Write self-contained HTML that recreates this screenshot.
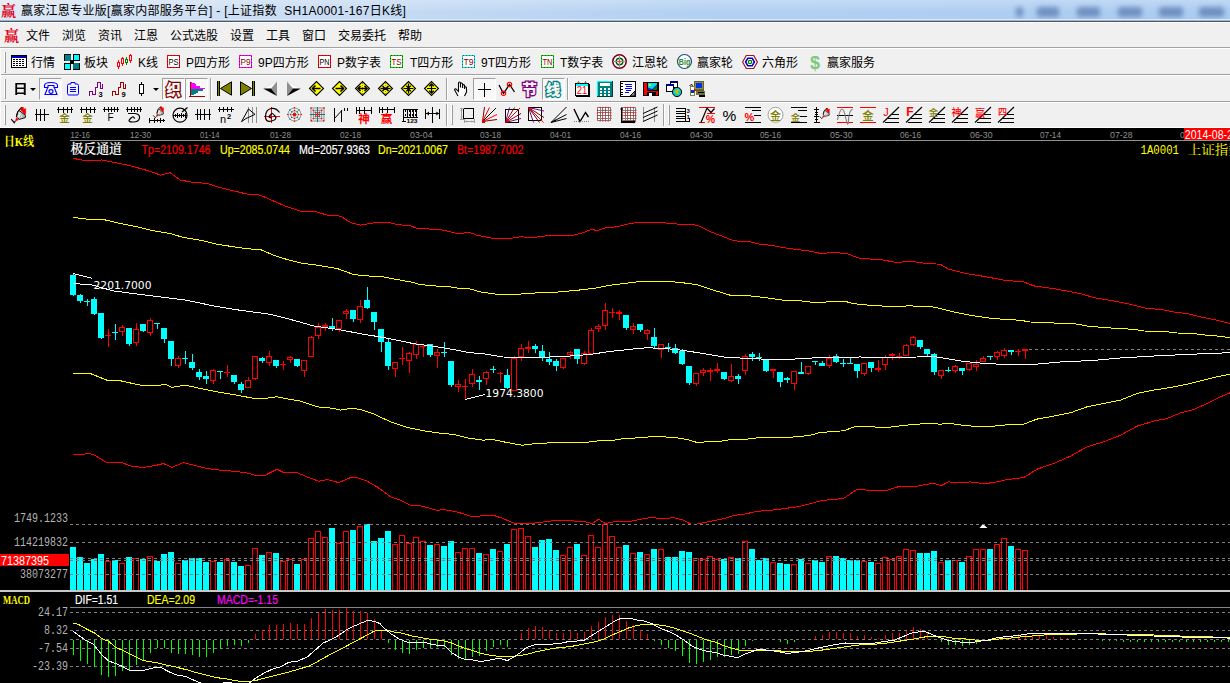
<!DOCTYPE html><html lang="zh"><head><meta charset="utf-8"><title>赢家江恩专业版</title><style>
*{margin:0;padding:0;box-sizing:border-box}
html,body{width:1230px;height:683px;overflow:hidden;background:#f0f0f0}
body{font-family:"Liberation Sans","Noto Sans CJK SC",sans-serif;font-size:12px;color:#000}
#r{position:relative;width:1230px;height:683px;overflow:hidden;background:#f0f0f0}
.a{position:absolute}
.t{position:absolute;white-space:nowrap;font-size:12px;line-height:14px;height:14px}
.hl{position:absolute;left:0;width:1230px;height:1px}
.ic{position:absolute;width:16px;height:16px;overflow:visible}
.grip{position:absolute;width:2px;border-left:1px solid #fff;border-right:1px solid #9a9a9a;border-bottom:1px solid #9a9a9a}
.sep{position:absolute;width:2px;border-left:1px solid #a0a0a0;border-right:1px solid #fff}
.pb{position:absolute;border:1px solid;border-color:#a0a0a0 #fff #fff #a0a0a0;background:#f8f8f8}
.arr{position:absolute;width:0;height:0;border:3px solid transparent;border-top:3px solid #000;border-bottom:0}
.blob{position:absolute;background:#5677ad;opacity:.7;filter:blur(2.5px);border-radius:2px}
</style></head><body><div id="r">
<div class="a" style="left:0;top:0;width:1230px;height:21px;background:linear-gradient(90deg,#dfe9f5 0,#d3e2f4 120px,#c3d9f3 420px,#b2d0f2 700px,#aacbf1 1230px)"></div>
<div class="a" style="left:0;top:0;width:1230px;height:21px;background:linear-gradient(180deg,rgba(255,255,255,.25),rgba(255,255,255,0) 60%)"></div>
<div class="blob" style="left:1016px;top:7px;width:7px;height:10px"></div>
<div class="blob" style="left:1037px;top:7px;width:22px;height:10px"></div>
<div class="blob" style="left:1077px;top:7px;width:23px;height:10px"></div>
<div class="blob" style="left:1118px;top:7px;width:24px;height:10px"></div>
<div class="blob" style="left:1159px;top:7px;width:24px;height:10px"></div>
<div class="blob" style="left:1199px;top:7px;width:25px;height:10px"></div>
<div class="hl" style="top:19px;background:#dbe8f6"></div><div class="hl" style="top:20px;background:#9fb4cc"></div><div class="hl" style="top:21px;background:#4d5a6b"></div><div class="hl" style="top:22px;background:#fcfcfc"></div>
<div class="t" style="left:1px;top:3px;font-size:15px;line-height:16px;height:16px;color:#e0001a;font-family:'Liberation Serif','Noto Serif CJK SC',serif;font-weight:700">赢</div>
<div class="t" id="ttl" style="left:21px;top:4px;letter-spacing:.29px">赢家江恩专业版[赢家内部服务平台] - [上证指数&nbsp; SH1A0001-167日K线]</div>
<div class="t" style="left:4px;top:28px;font-size:15px;line-height:16px;height:16px;color:#e0001a;font-family:'Liberation Serif','Noto Serif CJK SC',serif;font-weight:700">赢</div>
<div class="t" style="left:26px;top:29px">文件</div>
<div class="t" style="left:62px;top:29px">浏览</div>
<div class="t" style="left:98px;top:29px">资讯</div>
<div class="t" style="left:134px;top:29px">江恩</div>
<div class="t" style="left:170px;top:29px">公式选股</div>
<div class="t" style="left:230px;top:29px">设置</div>
<div class="t" style="left:266px;top:29px">工具</div>
<div class="t" style="left:302px;top:29px">窗口</div>
<div class="t" style="left:338px;top:29px">交易委托</div>
<div class="t" style="left:398px;top:29px">帮助</div>
<div class="hl" style="top:47px;background:#a0a0a0"></div><div class="hl" style="top:48px;background:#fff"></div>
<div class="hl" style="top:74px;background:#a0a0a0"></div><div class="hl" style="top:75px;background:#fff"></div>
<div class="hl" style="top:101px;background:#a0a0a0"></div><div class="hl" style="top:102px;background:#fff"></div>
<div class="hl" style="top:127px;background:#fff"></div><div class="a" style="left:0;top:49px;width:1px;height:78px;background:#fafafa"></div>
<div class="grip" style="left:4px;top:52px;height:21px"></div>
<div class="grip" style="left:4px;top:79px;height:20px"></div>
<div class="grip" style="left:4px;top:105px;height:20px"></div>
<div class="grip" style="left:451px;top:105px;height:20px"></div>
<div class="grip" style="left:668px;top:105px;height:20px"></div>
<div class="sep" style="left:210px;top:78px;height:22px"></div>
<div class="sep" style="left:446px;top:78px;height:22px"></div>
<div class="sep" style="left:567px;top:78px;height:22px"></div>
<div class="sep" style="left:446px;top:104px;height:22px"></div>
<div class="sep" style="left:663px;top:104px;height:22px"></div>
<svg class="ic" style="left:11px;top:54px" width="16" height="16" viewBox="0 0 16 16"><rect x="0" y="1" width="16" height="13" fill="#000" shape-rendering="crispEdges"/><rect x="1" y="2" width="14" height="11" fill="#fff" shape-rendering="crispEdges"/><rect x="1" y="2" width="14" height="2" fill="#0000c0" shape-rendering="crispEdges"/><rect x="2" y="5.0" width="2" height="1" fill="#000" shape-rendering="crispEdges"/><rect x="5" y="5.0" width="2" height="1" fill="#000" shape-rendering="crispEdges"/><rect x="8" y="5.0" width="2" height="1" fill="#000" shape-rendering="crispEdges"/><rect x="11" y="5.0" width="2" height="1" fill="#000" shape-rendering="crispEdges"/><rect x="2" y="7.0" width="2" height="1" fill="#000" shape-rendering="crispEdges"/><rect x="5" y="7.0" width="2" height="1" fill="#000" shape-rendering="crispEdges"/><rect x="8" y="7.0" width="2" height="1" fill="#000" shape-rendering="crispEdges"/><rect x="11" y="7.0" width="2" height="1" fill="#000" shape-rendering="crispEdges"/><rect x="2" y="9.0" width="2" height="1" fill="#000" shape-rendering="crispEdges"/><rect x="5" y="9.0" width="2" height="1" fill="#000" shape-rendering="crispEdges"/><rect x="8" y="9.0" width="2" height="1" fill="#000" shape-rendering="crispEdges"/><rect x="11" y="9.0" width="2" height="1" fill="#000" shape-rendering="crispEdges"/><rect x="2" y="11.0" width="2" height="1" fill="#000" shape-rendering="crispEdges"/><rect x="5" y="11.0" width="2" height="1" fill="#000" shape-rendering="crispEdges"/><rect x="8" y="11.0" width="2" height="1" fill="#000" shape-rendering="crispEdges"/><rect x="11" y="11.0" width="2" height="1" fill="#000" shape-rendering="crispEdges"/></svg>
<div class="t" style="left:31px;top:56px">行情</div>
<svg class="ic" style="left:64px;top:54px" width="16" height="16" viewBox="0 0 16 16"><rect x="0" y="0" width="16" height="16" fill="#000" shape-rendering="crispEdges"/><rect x="1" y="1" width="14" height="14" fill="#00c0c0" shape-rendering="crispEdges"/><rect x="1" y="1" width="6" height="6" fill="#008080" shape-rendering="crispEdges"/><rect x="9" y="0" width="7" height="7" fill="#000" shape-rendering="crispEdges"/><rect x="10" y="1" width="5" height="5" fill="#0ff" shape-rendering="crispEdges"/><rect x="0" y="9" width="7" height="7" fill="#000" shape-rendering="crispEdges"/><rect x="1" y="10" width="5" height="5" fill="#0ff" shape-rendering="crispEdges"/><rect x="9" y="9" width="6" height="6" fill="#008080" shape-rendering="crispEdges"/><rect x="7" y="0" width="2" height="16" fill="#f0f0f0" shape-rendering="crispEdges"/><rect x="0" y="7" width="16" height="2" fill="#f0f0f0" shape-rendering="crispEdges"/><rect x="6" y="6" width="4" height="4" fill="#000" shape-rendering="crispEdges"/></svg>
<div class="t" style="left:84px;top:56px">板块</div>
<svg class="ic" style="left:116px;top:54px" width="16" height="16" viewBox="0 0 16 16"><rect x="2" y="6" width="1" height="9" fill="#f00" shape-rendering="crispEdges"/><rect x="1" y="8" width="3" height="5" fill="#f00" shape-rendering="crispEdges"/><rect x="2" y="9" width="1" height="3" fill="#f0f0f0" shape-rendering="crispEdges"/><rect x="6" y="3" width="1" height="9" fill="#f00" shape-rendering="crispEdges"/><rect x="5" y="4" width="3" height="6" fill="#f00" shape-rendering="crispEdges"/><rect x="6" y="5" width="1" height="4" fill="#f0f0f0" shape-rendering="crispEdges"/><rect x="10" y="3" width="1" height="8" fill="#008000" shape-rendering="crispEdges"/><rect x="9" y="5" width="3" height="4" fill="#008000" shape-rendering="crispEdges"/><rect x="10" y="6" width="1" height="2" fill="#f0f0f0" shape-rendering="crispEdges"/><rect x="14" y="0" width="1" height="9" fill="#f00" shape-rendering="crispEdges"/><rect x="13" y="1" width="3" height="6" fill="#f00" shape-rendering="crispEdges"/><rect x="14" y="2" width="1" height="4" fill="#f0f0f0" shape-rendering="crispEdges"/></svg>
<div class="t" style="left:138px;top:56px">K线</div>
<svg class="ic" style="left:166px;top:54px" width="16" height="16" viewBox="0 0 16 16"><rect x="1" y="1" width="13" height="13" fill="#fff" shape-rendering="crispEdges"/><rect x="1.5" y="1.5" width="12" height="12" fill="none" stroke="#f00" stroke-width="1" shape-rendering="crispEdges"/><rect x="1.5" y="1.5" width="12" height="12" fill="none" stroke="#400000" stroke-opacity=".55" stroke-width="1" stroke-dasharray="1 2" shape-rendering="crispEdges"/><text x="7.5" y="10.6" font-size="8.5" fill="#000" font-family='"Liberation Sans","Noto Sans CJK SC",sans-serif' text-anchor="middle" textLength="10" lengthAdjust="spacingAndGlyphs">PS</text></svg>
<div class="t" style="left:186px;top:56px">P四方形</div>
<svg class="ic" style="left:238px;top:54px" width="16" height="16" viewBox="0 0 16 16"><rect x="1" y="1" width="13" height="13" fill="#fff" shape-rendering="crispEdges"/><rect x="1.5" y="1.5" width="12" height="12" fill="none" stroke="#f0f" stroke-width="1" shape-rendering="crispEdges"/><rect x="1.5" y="1.5" width="12" height="12" fill="none" stroke="#400000" stroke-opacity=".55" stroke-width="1" stroke-dasharray="1 2" shape-rendering="crispEdges"/><text x="7.5" y="10.6" font-size="8.5" fill="#800000" font-family='"Liberation Sans","Noto Sans CJK SC",sans-serif' text-anchor="middle" textLength="10" lengthAdjust="spacingAndGlyphs">P9</text></svg>
<div class="t" style="left:258px;top:56px">9P四方形</div>
<svg class="ic" style="left:317px;top:54px" width="16" height="16" viewBox="0 0 16 16"><rect x="1" y="1" width="13" height="13" fill="#fff" shape-rendering="crispEdges"/><rect x="1.5" y="1.5" width="12" height="12" fill="none" stroke="#f00" stroke-width="1" shape-rendering="crispEdges"/><rect x="1.5" y="1.5" width="12" height="12" fill="none" stroke="#400000" stroke-opacity=".55" stroke-width="1" stroke-dasharray="1 2" shape-rendering="crispEdges"/><text x="7.5" y="10.6" font-size="8.5" fill="#000" font-family='"Liberation Sans","Noto Sans CJK SC",sans-serif' text-anchor="middle" textLength="10" lengthAdjust="spacingAndGlyphs">PN</text></svg>
<div class="t" style="left:337px;top:56px">P数字表</div>
<svg class="ic" style="left:389px;top:54px" width="16" height="16" viewBox="0 0 16 16"><rect x="1" y="1" width="13" height="13" fill="#fff" shape-rendering="crispEdges"/><rect x="1.5" y="1.5" width="12" height="12" fill="none" stroke="#0c0" stroke-width="1" shape-rendering="crispEdges"/><rect x="1.5" y="1.5" width="12" height="12" fill="none" stroke="#400000" stroke-opacity=".55" stroke-width="1" stroke-dasharray="1 2" shape-rendering="crispEdges"/><text x="7.5" y="10.6" font-size="8.5" fill="#800000" font-family='"Liberation Sans","Noto Sans CJK SC",sans-serif' text-anchor="middle" textLength="10" lengthAdjust="spacingAndGlyphs">TS</text></svg>
<div class="t" style="left:410px;top:56px">T四方形</div>
<svg class="ic" style="left:461px;top:54px" width="16" height="16" viewBox="0 0 16 16"><rect x="1" y="1" width="13" height="13" fill="#fff" shape-rendering="crispEdges"/><rect x="1.5" y="1.5" width="12" height="12" fill="none" stroke="#0dd" stroke-width="1" shape-rendering="crispEdges"/><rect x="1.5" y="1.5" width="12" height="12" fill="none" stroke="#400000" stroke-opacity=".55" stroke-width="1" stroke-dasharray="1 2" shape-rendering="crispEdges"/><text x="7.5" y="10.6" font-size="8.5" fill="#800000" font-family='"Liberation Sans","Noto Sans CJK SC",sans-serif' text-anchor="middle" textLength="10" lengthAdjust="spacingAndGlyphs">T9</text></svg>
<div class="t" style="left:481px;top:56px">9T四方形</div>
<svg class="ic" style="left:540px;top:54px" width="16" height="16" viewBox="0 0 16 16"><rect x="1" y="1" width="13" height="13" fill="#fff" shape-rendering="crispEdges"/><rect x="1.5" y="1.5" width="12" height="12" fill="none" stroke="#0c0" stroke-width="1" shape-rendering="crispEdges"/><rect x="1.5" y="1.5" width="12" height="12" fill="none" stroke="#400000" stroke-opacity=".55" stroke-width="1" stroke-dasharray="1 2" shape-rendering="crispEdges"/><text x="7.5" y="10.6" font-size="8.5" fill="#800000" font-family='"Liberation Sans","Noto Sans CJK SC",sans-serif' text-anchor="middle" textLength="10" lengthAdjust="spacingAndGlyphs">TN</text></svg>
<div class="t" style="left:560px;top:56px">T数字表</div>
<svg class="ic" style="left:612px;top:54px" width="16" height="16" viewBox="0 0 16 16"><circle cx="7.5" cy="7.5" r="6.7" fill="#fff" stroke="#7a0020" stroke-width="1.6"/><circle cx="7.5" cy="7.5" r="3.3" fill="#fff" stroke="#006000" stroke-width="1.6"/><path d="M1 7.5L14 7.5" stroke="#909090" stroke-width="1" fill="none" /><path d="M7.5 1L7.5 14" stroke="#909090" stroke-width="1" fill="none" /><circle cx="7.5" cy="7.5" r="1.2" fill="#f04030"/></svg>
<div class="t" style="left:632px;top:56px">江恩轮</div>
<svg class="ic" style="left:677px;top:54px" width="16" height="16" viewBox="0 0 16 16"><circle cx="7.5" cy="7.5" r="7" fill="#fff" stroke="#1f4f7f" stroke-width="1.2"/><text x="7.6" y="10.8" font-size="9.5" fill="#2a8a2a" font-family='"Liberation Sans","Noto Sans CJK SC",sans-serif' font-weight="bold" text-anchor="middle" textLength="11.5" lengthAdjust="spacingAndGlyphs">Big</text></svg>
<div class="t" style="left:697px;top:56px">赢家轮</div>
<svg class="ic" style="left:742px;top:54px" width="16" height="16" viewBox="0 0 16 16"><path d="M0.6 8L4.3 1.5H11.7L15.4 8L11.7 14.5H4.3Z" stroke="#a01020" stroke-width="1.2" fill="#fff" /><path d="M3.6 8L5.8 4.2H10.2L12.4 8L10.2 11.8H5.8Z" stroke="#0000c0" stroke-width="1.6" fill="#fff" /><circle cx="8" cy="8" r="1.7" fill="#fff" stroke="#008000" stroke-width="1.2"/></svg>
<div class="t" style="left:762px;top:56px">六角形</div>
<svg class="ic" style="left:807px;top:54px" width="16" height="16" viewBox="0 0 16 16"><text x="8" y="14.5" font-size="18" fill="#7fc97f" font-family='"Liberation Sans","Noto Sans CJK SC",sans-serif' font-weight="bold" text-anchor="middle">$</text></svg>
<div class="t" style="left:827px;top:56px">赢家服务</div>
<div class="t" style="left:13px;top:81px;font-size:13px;line-height:16px;height:16px;font-weight:700;transform:scaleX(1.15);transform-origin:0 0">日</div>
<div class="arr" style="left:30px;top:88px"></div>
<div class="pb" style="left:39px;top:78px;width:23px;height:22px"></div>
<div class="arr" style="left:153px;top:88px"></div>
<div class="pb" style="left:162px;top:78px;width:23px;height:22px"></div>
<div class="pb" style="left:185px;top:78px;width:23px;height:22px"></div>
<div class="pb" style="left:473px;top:78px;width:23px;height:22px"></div>
<div class="pb" style="left:542px;top:78px;width:23px;height:22px"></div>
<svg class="ic" style="left:43px;top:81px" width="16" height="16" viewBox="0 0 16 16"><path d="M1.5 4.5C1.5 2 5 1.5 8 1.5S14.5 2 14.5 4.5V6.5H11V4.5H5V6.5H1.5ZM4.5 7L2 13.5H14L11.5 7M6 10.5C6 8 10 8 10 10.5S6 13 6 10.5Z" stroke="#00f" stroke-width="1.1" fill="none" /></svg>
<svg class="ic" style="left:65px;top:81px" width="16" height="16" viewBox="0 0 16 16"><path d="M4 3H6V1.5H10V3H12Q13.5 3 13.5 4.5V12.5Q13.5 14 12 14H4Q2.5 14 2.5 12.5V4.5Q2.5 3 4 3Z" stroke="#00f" stroke-width="1.0" fill="none" /><rect x="5" y="6" width="6" height="1" fill="#00f" shape-rendering="crispEdges"/><rect x="5" y="8" width="6" height="1" fill="#00f" shape-rendering="crispEdges"/><rect x="5" y="10" width="6" height="1" fill="#00f" shape-rendering="crispEdges"/></svg>
<svg class="ic" style="left:88px;top:81px" width="16" height="16" viewBox="0 0 16 16"><path d="M1.5 14.5V10.5H4.5V13.5H7.5V6.5H9.5V1.5H12.5V7.5H14.5V3" stroke="#800080" stroke-width="1" fill="none" shape-rendering="crispEdges"/><text x="10.5" y="15.8" font-size="7.5" fill="#000" font-family='"Liberation Sans","Noto Sans CJK SC",sans-serif' font-weight="bold" >3</text></svg>
<svg class="ic" style="left:111px;top:81px" width="16" height="16" viewBox="0 0 16 16"><path d="M1.5 14.5V10.5H4.5V13.5H7.5V6.5H9.5V1.5H12.5V7.5H14.5V3" stroke="#a00000" stroke-width="1" fill="none" shape-rendering="crispEdges"/><text x="10.5" y="15.8" font-size="7.5" fill="#000" font-family='"Liberation Sans","Noto Sans CJK SC",sans-serif' font-weight="bold" >9</text></svg>
<svg class="ic" style="left:134px;top:81px" width="16" height="16" viewBox="0 0 16 16"><rect x="7" y="1" width="1" height="14" fill="#000" shape-rendering="crispEdges"/><rect x="5" y="3" width="5" height="10" fill="#000" shape-rendering="crispEdges"/><rect x="6" y="4" width="3" height="8" fill="#fff" shape-rendering="crispEdges"/></svg>
<svg class="ic" style="left:166px;top:81px" width="16" height="16" viewBox="0 0 16 16"><text x="7.5" y="13.5" font-size="14.5" fill="#f6f6f6" font-family='"Liberation Sans","Noto Sans CJK SC",sans-serif' font-weight="900" text-anchor="middle" stroke="#800000" stroke-width="2.5" paint-order="stroke">织</text></svg>
<svg class="ic" style="left:189px;top:81px" width="16" height="16" viewBox="0 0 16 16"><path d="M1.5 1V16M0 15.5H16" stroke="#a00000" stroke-width="1.2" fill="none" shape-rendering="crispEdges"/><path d="M2 1L7 3V4.5L11 5.5V6.5L16 7.5V8H2Z" stroke="none" stroke-width="0" fill="#f0f" shape-rendering="crispEdges"/><path d="M2 8H14V9.5H9V11.5H7V12.5H5V13.5H2Z" stroke="none" stroke-width="0" fill="#008080" shape-rendering="crispEdges"/></svg>
<svg class="ic" style="left:217px;top:81px" width="16" height="16" viewBox="0 0 16 16"><rect x="0" y="0" width="3" height="15" fill="#000" shape-rendering="crispEdges"/><rect x="1" y="0" width="1" height="15" fill="#808000" shape-rendering="crispEdges"/><path d="M3.5 7.5L14.5 0.8V14.2Z" stroke="#000" stroke-width="1" fill="#808000" /></svg>
<svg class="ic" style="left:240px;top:81px" width="16" height="16" viewBox="0 0 16 16"><rect x="12" y="0" width="3" height="15" fill="#000" shape-rendering="crispEdges"/><rect x="13" y="0" width="1" height="15" fill="#808000" shape-rendering="crispEdges"/><path d="M11.5 7.5L0.5 0.8V14.2Z" stroke="#000" stroke-width="1" fill="#808000" /></svg>
<svg class="ic" style="left:263px;top:81px" width="16" height="16" viewBox="0 0 16 16"><path d="M0 7.5L14 0.5L8 7.5Z" stroke="none" stroke-width="0" fill="#fff" /><path d="M14 0.5V15L8 7.5Z" stroke="none" stroke-width="0" fill="#909090" /><path d="M0 7.5L8 7.5L14 15Z" stroke="none" stroke-width="0" fill="#000" /><path d="M0 7.5L14 0.5" stroke="#d8d8d8" stroke-width="0.6" fill="none" /></svg>
<svg class="ic" style="left:286px;top:81px" width="16" height="16" viewBox="0 0 16 16"><path d="M15 7.5L1 0.5L7 7.5Z" stroke="none" stroke-width="0" fill="#fff" /><path d="M1 0.5V15L7 7.5Z" stroke="none" stroke-width="0" fill="#909090" /><path d="M15 7.5L7 7.5L1 15Z" stroke="none" stroke-width="0" fill="#000" /><path d="M15 7.5L1 0.5" stroke="#d8d8d8" stroke-width="0.6" fill="none" /></svg>
<svg class="ic" style="left:309px;top:81px" width="16" height="16" viewBox="0 0 16 16"><path d="M0.5 7.5L7.5 0.5L14.5 7.5L7.5 14.5Z" stroke="#000" stroke-width="1.1" fill="#ff0" /><path d="M3.5 7.5H11.5" stroke="#000" stroke-width="1.5" fill="none" /><path d="M6.5 4.5L3.5 7.5L6.5 10.5" stroke="#000" stroke-width="1.5" fill="none" /></svg>
<svg class="ic" style="left:332px;top:81px" width="16" height="16" viewBox="0 0 16 16"><path d="M0.5 7.5L7.5 0.5L14.5 7.5L7.5 14.5Z" stroke="#000" stroke-width="1.1" fill="#ff0" /><path d="M3.5 7.5H11.5" stroke="#000" stroke-width="1.5" fill="none" /><path d="M8.5 4.5L11.5 7.5L8.5 10.5" stroke="#000" stroke-width="1.5" fill="none" /></svg>
<svg class="ic" style="left:355px;top:81px" width="16" height="16" viewBox="0 0 16 16"><path d="M0.5 7.5L7.5 0.5L14.5 7.5L7.5 14.5Z" stroke="#000" stroke-width="1.1" fill="#ff0" /><path d="M7.5 2V13" stroke="#808080" stroke-width="1" fill="none" stroke-dasharray="1 1" shape-rendering="crispEdges"/><path d="M3 7.5H12" stroke="#000" stroke-width="1.5" fill="none" /><path d="M5.5 5L3 7.5L5.5 10M9.5 5L12 7.5L9.5 10" stroke="#000" stroke-width="1.5" fill="none" /></svg>
<svg class="ic" style="left:378px;top:81px" width="16" height="16" viewBox="0 0 16 16"><path d="M0.5 7.5L7.5 0.5L14.5 7.5L7.5 14.5Z" stroke="#000" stroke-width="1.1" fill="#ff0" /><path d="M7.5 2V13" stroke="#808080" stroke-width="1" fill="none" stroke-dasharray="1 1" shape-rendering="crispEdges"/><path d="M2.5 7.5H12.5" stroke="#000" stroke-width="1.3" fill="none" /><path d="M4.5 5L7 7.5L4.5 10M10.5 5L8 7.5L10.5 10" stroke="#000" stroke-width="1.5" fill="none" /></svg>
<svg class="ic" style="left:401px;top:81px" width="16" height="16" viewBox="0 0 16 16"><path d="M0.5 7.5L7.5 0.5L14.5 7.5L7.5 14.5Z" stroke="#000" stroke-width="1.1" fill="#ff0" /><path d="M2.5 7.5H12.5" stroke="#000" stroke-width="1" fill="none" /><path d="M7.5 2.5V12.5" stroke="#000" stroke-width="1.2" fill="none" /><path d="M5.3 4.7L7.5 7L9.7 4.7M5.3 10.3L7.5 8L9.7 10.3" stroke="#000" stroke-width="1.3" fill="none" /></svg>
<svg class="ic" style="left:424px;top:81px" width="16" height="16" viewBox="0 0 16 16"><path d="M0.5 7.5L7.5 0.5L14.5 7.5L7.5 14.5Z" stroke="#000" stroke-width="1.1" fill="#ff0" /><path d="M3 7.5H12" stroke="#000" stroke-width="1" fill="none" /><path d="M7.5 3V12" stroke="#000" stroke-width="1.2" fill="none" /><path d="M5.3 5.2L7.5 3L9.7 5.2M5.3 9.8L7.5 12L9.7 9.8" stroke="#000" stroke-width="1.3" fill="none" /></svg>
<svg class="ic" style="left:453px;top:81px" width="16" height="16" viewBox="0 0 16 16"><path d="M5 15L2.5 10.5Q1 8.5 2 8T4.5 9.5L5.5 10.5V2.5Q5.5 1 6.5 1T7.5 2.5V6.5V2.8Q7.8 1.8 8.7 2T9.6 3.5V7V4.2Q10.2 3.4 11 3.8T11.6 5V8V6Q12.4 5.4 13 6T13.5 8V11L11.5 15" stroke="#000" stroke-width="1.1" fill="#fff" /></svg>
<svg class="ic" style="left:476px;top:81px" width="16" height="16" viewBox="0 0 16 16"><rect x="2" y="8" width="13" height="1.4" fill="#000" shape-rendering="crispEdges"/><rect x="8" y="1.5" width="1.4" height="14.5" fill="#000" shape-rendering="crispEdges"/></svg>
<svg class="ic" style="left:499px;top:81px" width="16" height="16" viewBox="0 0 16 16"><path d="M0 4L4.5 12.5L10.5 3.5L15.5 11" stroke="#000" stroke-width="1.3" fill="none" /><circle cx="4.5" cy="12.3" r="2.2" fill="none" stroke="#f00" stroke-width="1.1"/><circle cx="10.5" cy="3.5" r="2.2" fill="none" stroke="#f00" stroke-width="1.1"/></svg>
<svg class="ic" style="left:522px;top:81px" width="16" height="16" viewBox="0 0 16 16"><text x="7.5" y="13.5" font-size="14.5" fill="#f0f0f0" font-family='"Liberation Sans","Noto Sans CJK SC",sans-serif' font-weight="900" text-anchor="middle" stroke="#800080" stroke-width="2.5" paint-order="stroke">节</text></svg>
<svg class="ic" style="left:545px;top:81px" width="16" height="16" viewBox="0 0 16 16"><text x="8" y="13.5" font-size="14.5" fill="#f6f6f6" font-family='"Liberation Sans","Noto Sans CJK SC",sans-serif' font-weight="900" text-anchor="middle" stroke="#008080" stroke-width="2.5" paint-order="stroke">线</text></svg>
<svg class="ic" style="left:574px;top:81px" width="16" height="16" viewBox="0 0 16 16"><rect x="2" y="3" width="14" height="13" fill="#000" shape-rendering="crispEdges"/><rect x="1" y="2" width="14" height="13" fill="#000" shape-rendering="crispEdges"/><rect x="2" y="3" width="12" height="11" fill="#fff" shape-rendering="crispEdges"/><rect x="2" y="3" width="12" height="2" fill="#0ff" shape-rendering="crispEdges"/><path d="M3.5 2.5L4.5 0.5L5.5 2.5M10.5 2.5L11.5 0.5L12.5 2.5" stroke="#606060" stroke-width="1" fill="none" /><text x="8" y="13.2" font-size="10.5" fill="#f00" font-family='"Liberation Sans","Noto Sans CJK SC",sans-serif' text-anchor="middle" textLength="10.5" lengthAdjust="spacingAndGlyphs">21</text></svg>
<svg class="ic" style="left:597px;top:81px" width="16" height="16" viewBox="0 0 16 16"><rect x="0" y="0" width="16" height="16" fill="#004040" shape-rendering="crispEdges"/><rect x="0" y="0" width="15" height="15" fill="#0ff" shape-rendering="crispEdges"/><rect x="1" y="1" width="14" height="14" fill="#008080" shape-rendering="crispEdges"/><rect x="3" y="2" width="10" height="3" fill="#fff" shape-rendering="crispEdges"/><rect x="3" y="7" width="2" height="2" fill="#fff" shape-rendering="crispEdges"/><rect x="7" y="7" width="2" height="2" fill="#fff" shape-rendering="crispEdges"/><rect x="11" y="7" width="2" height="2" fill="#fff" shape-rendering="crispEdges"/><rect x="3" y="10" width="2" height="2" fill="#fff" shape-rendering="crispEdges"/><rect x="7" y="10" width="2" height="2" fill="#fff" shape-rendering="crispEdges"/><rect x="11" y="10" width="2" height="2" fill="#fff" shape-rendering="crispEdges"/><rect x="3" y="13" width="2" height="2" fill="#fff" shape-rendering="crispEdges"/><rect x="7" y="13" width="2" height="2" fill="#fff" shape-rendering="crispEdges"/><rect x="11" y="13" width="2" height="2" fill="#fff" shape-rendering="crispEdges"/></svg>
<svg class="ic" style="left:620px;top:81px" width="16" height="16" viewBox="0 0 16 16"><rect x="0" y="0" width="16" height="16" fill="#000" shape-rendering="crispEdges"/><rect x="1" y="1" width="14" height="14" fill="#fff" shape-rendering="crispEdges"/><rect x="1" y="2" width="2" height="1" fill="#000" shape-rendering="crispEdges"/><rect x="1" y="5" width="2" height="1" fill="#000" shape-rendering="crispEdges"/><rect x="1" y="8" width="2" height="1" fill="#000" shape-rendering="crispEdges"/><rect x="1" y="11" width="2" height="1" fill="#000" shape-rendering="crispEdges"/><rect x="1" y="13" width="2" height="1" fill="#000" shape-rendering="crispEdges"/><rect x="5" y="3" width="7" height="1.3" fill="#00f" shape-rendering="crispEdges"/><rect x="6" y="5" width="6" height="1.3" fill="#00f" shape-rendering="crispEdges"/><rect x="5" y="7" width="7" height="1.3" fill="#00f" shape-rendering="crispEdges"/><rect x="6" y="9" width="5" height="1.3" fill="#00f" shape-rendering="crispEdges"/><rect x="5" y="11" width="4" height="1.3" fill="#00f" shape-rendering="crispEdges"/><path d="M15 10L10 15H15Z" stroke="#000" stroke-width="1" fill="#909090" /></svg>
<svg class="ic" style="left:643px;top:81px" width="16" height="16" viewBox="0 0 16 16"><rect x="0" y="1" width="16" height="14" fill="#000" shape-rendering="crispEdges"/><rect x="1" y="2" width="14" height="12" fill="#f00" shape-rendering="crispEdges"/><rect x="4" y="1" width="11" height="9" fill="#000" shape-rendering="crispEdges"/><rect x="5" y="2" width="9" height="7" fill="#00e0e0" shape-rendering="crispEdges"/><path d="M5 9V6.5L9 8L14 3.5V9Z" stroke="none" stroke-width="0" fill="#0030d0" /><path d="M10 9L14 4.5V9Z" stroke="none" stroke-width="0" fill="#008000" /><circle cx="7" cy="4" r="1" fill="#ff0"/><rect x="4" y="11" width="9" height="4" fill="#000" shape-rendering="crispEdges"/><rect x="6" y="12" width="3" height="3" fill="#fff" shape-rendering="crispEdges"/></svg>
<svg class="ic" style="left:666px;top:81px" width="16" height="16" viewBox="0 0 16 16"><rect x="4" y="0" width="8" height="7" fill="#000" shape-rendering="crispEdges"/><rect x="5" y="1" width="6" height="5" fill="#fff" shape-rendering="crispEdges"/><rect x="4" y="0" width="8" height="2" fill="#000080" shape-rendering="crispEdges"/><rect x="0" y="3" width="8" height="8" fill="#000" shape-rendering="crispEdges"/><rect x="1" y="4" width="6" height="6" fill="#fff" shape-rendering="crispEdges"/><rect x="0" y="3" width="8" height="2" fill="#000080" shape-rendering="crispEdges"/><circle cx="11" cy="11" r="4.6" fill="#00c8d8" stroke="#000" stroke-width="1"/><path d="M8 10L10.5 9L12 7.5L13.5 9.5L12 11L13 13L10.5 13.5L9.5 11.5Z" stroke="none" stroke-width="0" fill="#c8c000" /></svg>
<svg class="ic" style="left:689px;top:81px" width="16" height="16" viewBox="0 0 16 16"><rect x="5" y="0" width="10" height="10" fill="#606030" shape-rendering="crispEdges"/><rect x="6" y="1" width="8" height="7" fill="#909050" shape-rendering="crispEdges"/><rect x="7" y="2" width="6" height="5" fill="#0030e0" shape-rendering="crispEdges"/><rect x="7" y="10" width="9" height="4" fill="#707040" shape-rendering="crispEdges"/><rect x="9" y="11" width="6" height="1" fill="#000" shape-rendering="crispEdges"/><rect x="10" y="14" width="6" height="2" fill="#000" shape-rendering="crispEdges"/><rect x="1" y="5" width="5" height="10" fill="#808040" shape-rendering="crispEdges"/><rect x="2" y="6" width="3" height="3" fill="#fff" shape-rendering="crispEdges"/><rect x="2" y="9" width="3" height="3" fill="#0030d0" shape-rendering="crispEdges"/><rect x="2" y="12" width="3" height="2" fill="#fff" shape-rendering="crispEdges"/><rect x="5" y="8" width="1" height="3" fill="#e00000" shape-rendering="crispEdges"/><path d="M0.5 5L2 3.5L4 4.5" stroke="#000" stroke-width="1" fill="none" /></svg>
<svg class="ic" style="left:11px;top:107px" width="16" height="16" viewBox="0 0 16 16"><g transform="translate(0,0) scale(1.0)"><path d="M8.9 2.5L10.5 0.1H12.8L12.5 1.5L13.8 1.8L14.9 0.9V7L14.4 8.3Z" stroke="none" stroke-width="0" fill="#f00" /><path d="M7.9 3.3L14.4 8.3V10.6L8.3 12.4L5.5 10L6.5 5.4Z" stroke="#000" stroke-width="0.9" fill="#b4b4b4" /><path d="M9 5.5L7.5 10.5" stroke="#ececec" stroke-width="2.2" fill="none" /><path d="M11 7.5L10 11" stroke="#d8d8d8" stroke-width="1.2" fill="none" /><path d="M10.5 0.1L6.7 4.6L5.3 9.5" stroke="#000" stroke-width="1" fill="none" /><path d="M5.1 10.6L7.8 12.5L6.7 13.6L4.1 14.2Z" stroke="none" stroke-width="0" fill="#f00" /><path d="M4.3 14L3.3 15.7L0.2 12.2" stroke="#000" stroke-width="1.1" fill="none" /></g></svg>
<svg class="ic" style="left:34px;top:107px" width="16" height="16" viewBox="0 0 16 16"><rect x="2" y="2" width="1" height="12" fill="#000" shape-rendering="crispEdges"/><rect x="6" y="2" width="1" height="12" fill="#000" shape-rendering="crispEdges"/><rect x="10" y="2" width="1" height="12" fill="#000" shape-rendering="crispEdges"/><rect x="1" y="7" width="14" height="1" fill="#000" shape-rendering="crispEdges"/></svg>
<svg class="ic" style="left:57px;top:107px" width="16" height="16" viewBox="0 0 16 16"><rect x="0" y="2" width="16" height="1" fill="#000" shape-rendering="crispEdges"/><rect x="1" y="0" width="1" height="6" fill="#000" shape-rendering="crispEdges"/><rect x="6" y="0" width="1" height="6" fill="#000" shape-rendering="crispEdges"/><rect x="10" y="0" width="1" height="6" fill="#000" shape-rendering="crispEdges"/><rect x="14" y="0" width="1" height="6" fill="#000" shape-rendering="crispEdges"/><text x="7.5" y="15" font-size="10.5" fill="#808000" font-family='"Liberation Sans","Noto Sans CJK SC",sans-serif' font-weight="500" text-anchor="middle">金</text></svg>
<svg class="ic" style="left:80px;top:107px" width="16" height="16" viewBox="0 0 16 16"><rect x="0" y="2" width="16" height="1" fill="#000" shape-rendering="crispEdges"/><rect x="1" y="0" width="1" height="6" fill="#000" shape-rendering="crispEdges"/><rect x="6" y="0" width="1" height="6" fill="#000" shape-rendering="crispEdges"/><rect x="10" y="0" width="1" height="6" fill="#000" shape-rendering="crispEdges"/><rect x="14" y="0" width="1" height="6" fill="#000" shape-rendering="crispEdges"/><text x="7.5" y="15" font-size="10.5" fill="#808000" font-family='"Liberation Sans","Noto Sans CJK SC",sans-serif' font-weight="500" text-anchor="middle">金</text></svg>
<svg class="ic" style="left:103px;top:107px" width="16" height="16" viewBox="0 0 16 16"><rect x="0" y="2" width="16" height="1" fill="#000" shape-rendering="crispEdges"/><rect x="1" y="0" width="1" height="5" fill="#000" shape-rendering="crispEdges"/><rect x="5" y="0" width="1" height="5" fill="#000" shape-rendering="crispEdges"/><rect x="8" y="0" width="1" height="5" fill="#000" shape-rendering="crispEdges"/><rect x="11" y="0" width="1" height="5" fill="#000" shape-rendering="crispEdges"/><rect x="14" y="0" width="1" height="5" fill="#000" shape-rendering="crispEdges"/><text x="7.5" y="14.3" font-size="10" fill="#000" font-family='"Liberation Sans","Noto Sans CJK SC",sans-serif' text-anchor="middle">F</text></svg>
<svg class="ic" style="left:126px;top:107px" width="16" height="16" viewBox="0 0 16 16"><rect x="0" y="2" width="16" height="1" fill="#000" shape-rendering="crispEdges"/><rect x="1" y="0" width="1" height="5" fill="#000" shape-rendering="crispEdges"/><rect x="5" y="0" width="1" height="5" fill="#000" shape-rendering="crispEdges"/><rect x="8" y="0" width="1" height="5" fill="#000" shape-rendering="crispEdges"/><rect x="11" y="0" width="1" height="5" fill="#000" shape-rendering="crispEdges"/><rect x="14" y="0" width="1" height="5" fill="#000" shape-rendering="crispEdges"/><path d="M2 6.5H9Q14 7 13.5 11T7 15T4 12T7.5 10T9 11.5" stroke="#000" stroke-width="1.2" fill="none" /></svg>
<svg class="ic" style="left:149px;top:107px" width="16" height="16" viewBox="0 0 16 16"><g transform="translate(4,-0.5) scale(0.72)"><path d="M8.9 2.5L10.5 0.1H12.8L12.5 1.5L13.8 1.8L14.9 0.9V7L14.4 8.3Z" stroke="none" stroke-width="0" fill="#f00" /><path d="M7.9 3.3L14.4 8.3V10.6L8.3 12.4L5.5 10L6.5 5.4Z" stroke="#000" stroke-width="0.9" fill="#b4b4b4" /><path d="M9 5.5L7.5 10.5" stroke="#ececec" stroke-width="2.2" fill="none" /><path d="M11 7.5L10 11" stroke="#d8d8d8" stroke-width="1.2" fill="none" /><path d="M10.5 0.1L6.7 4.6L5.3 9.5" stroke="#000" stroke-width="1" fill="none" /><path d="M5.1 10.6L7.8 12.5L6.7 13.6L4.1 14.2Z" stroke="none" stroke-width="0" fill="#f00" /><path d="M4.3 14L3.3 15.7L0.2 12.2" stroke="#000" stroke-width="1.1" fill="none" /></g><rect x="0" y="13" width="16" height="1" fill="#000" shape-rendering="crispEdges"/><rect x="0" y="11" width="1" height="5" fill="#000" shape-rendering="crispEdges"/><rect x="5" y="11" width="1" height="5" fill="#000" shape-rendering="crispEdges"/><rect x="8" y="12" width="1" height="3" fill="#000" shape-rendering="crispEdges"/><rect x="11" y="11" width="1" height="5" fill="#000" shape-rendering="crispEdges"/><rect x="14" y="12" width="1" height="3" fill="#000" shape-rendering="crispEdges"/></svg>
<svg class="ic" style="left:172px;top:107px" width="16" height="16" viewBox="0 0 16 16"><circle cx="8" cy="8.2" r="7" fill="none" stroke="#000" stroke-width="1.2"/><rect x="1" y="8" width="14" height="1" fill="#000" shape-rendering="crispEdges"/><path d="M10 5L15.5 0.5" stroke="#000" stroke-width="1.2" fill="none" /><rect x="3" y="7" width="1" height="3" fill="#000" shape-rendering="crispEdges"/><rect x="5" y="6" width="1" height="5" fill="#000" shape-rendering="crispEdges"/><rect x="7" y="7" width="1" height="3" fill="#000" shape-rendering="crispEdges"/><rect x="9" y="6" width="1" height="5" fill="#000" shape-rendering="crispEdges"/><rect x="11" y="7" width="1" height="3" fill="#000" shape-rendering="crispEdges"/><rect x="13" y="6" width="1" height="5" fill="#000" shape-rendering="crispEdges"/></svg>
<svg class="ic" style="left:195px;top:107px" width="16" height="16" viewBox="0 0 16 16"><rect x="2" y="2" width="1" height="11" fill="#000" shape-rendering="crispEdges"/><rect x="5" y="2" width="1" height="11" fill="#000" shape-rendering="crispEdges"/><rect x="9" y="2" width="1" height="11" fill="#000" shape-rendering="crispEdges"/><rect x="14" y="2" width="1" height="11" fill="#000" shape-rendering="crispEdges"/><rect x="0" y="7" width="16" height="1" fill="#000" shape-rendering="crispEdges"/></svg>
<svg class="ic" style="left:218px;top:107px" width="16" height="16" viewBox="0 0 16 16"><rect x="0" y="2" width="16" height="1" fill="#000" shape-rendering="crispEdges"/><rect x="1" y="0" width="1" height="5" fill="#000" shape-rendering="crispEdges"/><rect x="5" y="0" width="1" height="5" fill="#000" shape-rendering="crispEdges"/><rect x="9" y="0" width="1" height="5" fill="#000" shape-rendering="crispEdges"/><rect x="13" y="0" width="1" height="5" fill="#000" shape-rendering="crispEdges"/><text x="2" y="15.5" font-size="11" fill="#000" font-family='"Liberation Sans","Noto Sans CJK SC",sans-serif' >n</text><text x="9" y="11.5" font-size="7.5" fill="#000" font-family='"Liberation Sans","Noto Sans CJK SC",sans-serif' font-weight="bold" >2</text></svg>
<svg class="ic" style="left:241px;top:107px" width="16" height="16" viewBox="0 0 16 16"><rect x="7" y="0" width="1" height="16" fill="#909090" shape-rendering="crispEdges"/><rect x="11" y="0" width="1" height="16" fill="#909090" shape-rendering="crispEdges"/><rect x="15" y="0" width="1" height="16" fill="#909090" shape-rendering="crispEdges"/><path d="M0.5 14.7L7.5 2L14 7.4L5 11.5Z" stroke="#000" stroke-width="1" fill="none" /></svg>
<svg class="ic" style="left:264px;top:107px" width="16" height="16" viewBox="0 0 16 16"><rect x="0" y="9" width="16" height="1.2" fill="#f00" shape-rendering="crispEdges"/><rect x="7" y="0" width="1.2" height="16" fill="#f00" shape-rendering="crispEdges"/><path d="M15.5 5.5Q12 0.5 7 1.5T1.5 9T7.5 14T11 9T7.5 6.5T5.5 9T8 11" stroke="#000" stroke-width="1.2" fill="none" /></svg>
<svg class="ic" style="left:287px;top:107px" width="16" height="16" viewBox="0 0 16 16"><circle cx="7.5" cy="7.5" r="6.5" fill="none" stroke="#808080" stroke-width=".8"/><circle cx="7.5" cy="7.5" r="3.8" fill="none" stroke="#808080" stroke-width=".8"/><path d="M2.5 2.5L12.5 12.5M12.5 2.5L2.5 12.5" stroke="#008080" stroke-width="1.2" fill="none" stroke-dasharray="1.4 1.2"/><path d="M0 7.5H15M7.5 0V15" stroke="#f00" stroke-width="1.2" fill="none" stroke-dasharray="1.5 1.2"/><rect x="6.3" y="6.3" width="2.4" height="2.4" fill="#f00" /></svg>
<svg class="ic" style="left:310px;top:107px" width="16" height="16" viewBox="0 0 16 16"><rect x="1.0" y="1.0" width="13.0" height="13.0" fill="none" stroke="#808080" stroke-width=".9"/><rect x="3.3" y="3.3" width="8.4" height="8.4" fill="none" stroke="#808080" stroke-width=".9"/><rect x="5.5" y="5.5" width="4" height="4" fill="none" stroke="#808080" stroke-width=".9"/><path d="M7.5 0V15M0 7.5H15" stroke="#008080" stroke-width="1" fill="none" /><path d="M0.5 0.5L14.5 14.5M14.5 0.5L0.5 14.5" stroke="#f00" stroke-width="1.3" fill="none" stroke-dasharray="1.4 1.6"/><rect x="6.5" y="6.5" width="2" height="2" fill="#f00" /></svg>
<svg class="ic" style="left:333px;top:107px" width="16" height="16" viewBox="0 0 16 16"><rect x="1" y="1" width="1" height="14" fill="#000" shape-rendering="crispEdges"/><rect x="8.3" y="2.5" width="1" height="12.5" fill="#000" shape-rendering="crispEdges"/><path d="M1.5 11.5L8.8 3.5" stroke="#000" stroke-width="1" fill="none" /><rect x="11.3" y="1" width="1" height="3" fill="#000" shape-rendering="crispEdges"/><rect x="14" y="1" width="1" height="3" fill="#000" shape-rendering="crispEdges"/></svg>
<svg class="ic" style="left:356px;top:107px" width="16" height="16" viewBox="0 0 16 16"><rect x="0" y="3" width="16" height="1" fill="#000" shape-rendering="crispEdges"/><rect x="0" y="0" width="1" height="7" fill="#000" shape-rendering="crispEdges"/><rect x="3" y="0" width="1" height="7" fill="#000" shape-rendering="crispEdges"/><rect x="8" y="0" width="1" height="7" fill="#000" shape-rendering="crispEdges"/><rect x="15" y="0" width="1" height="7" fill="#000" shape-rendering="crispEdges"/><text x="8" y="16" font-size="11.5" fill="#f00" font-family='"Liberation Sans","Noto Sans CJK SC",sans-serif' font-weight="700" text-anchor="middle">神</text></svg>
<svg class="ic" style="left:379px;top:107px" width="16" height="16" viewBox="0 0 16 16"><rect x="0" y="2" width="16" height="1" fill="#000" shape-rendering="crispEdges"/><rect x="0" y="0" width="1" height="6" fill="#000" shape-rendering="crispEdges"/><rect x="3" y="0" width="1" height="6" fill="#000" shape-rendering="crispEdges"/><rect x="8" y="0" width="1" height="6" fill="#000" shape-rendering="crispEdges"/><rect x="15" y="0" width="1" height="6" fill="#000" shape-rendering="crispEdges"/><text x="7.5" y="16" font-size="11.5" fill="#f00" font-family='"Liberation Sans","Noto Sans CJK SC",sans-serif' font-weight="700" text-anchor="middle">赢</text></svg>
<svg class="ic" style="left:402px;top:107px" width="16" height="16" viewBox="0 0 16 16"><rect x="1" y="1.5" width="14.5" height="1.1" fill="#000" shape-rendering="crispEdges"/><rect x="1" y="10" width="14.5" height="1.1" fill="#000" shape-rendering="crispEdges"/><rect x="1" y="1.5" width="1.2" height="13.5" fill="#000" shape-rendering="crispEdges"/><rect x="0" y="14" width="3.5" height="1.2" fill="#000" shape-rendering="crispEdges"/><rect x="5" y="1.5" width="1.1" height="9" fill="#000" shape-rendering="crispEdges"/><rect x="8" y="1.5" width="1.1" height="9" fill="#000" shape-rendering="crispEdges"/><rect x="11" y="1.5" width="1.1" height="9" fill="#000" shape-rendering="crispEdges"/><rect x="14.3" y="1.5" width="1.1" height="9" fill="#000" shape-rendering="crispEdges"/><rect x="3" y="3" width="1" height="2" fill="#000" shape-rendering="crispEdges"/><rect x="3" y="6.5" width="1" height="2" fill="#000" shape-rendering="crispEdges"/><rect x="6.6" y="3" width="1" height="2" fill="#000" shape-rendering="crispEdges"/><rect x="6.6" y="6.5" width="1" height="2" fill="#000" shape-rendering="crispEdges"/><rect x="9.6" y="3" width="1" height="2" fill="#000" shape-rendering="crispEdges"/><rect x="9.6" y="6.5" width="1" height="2" fill="#000" shape-rendering="crispEdges"/><rect x="12.8" y="3" width="1" height="2" fill="#000" shape-rendering="crispEdges"/><rect x="12.8" y="6.5" width="1" height="2" fill="#000" shape-rendering="crispEdges"/><text x="4.5" y="15.8" font-size="5.5" fill="#000" font-family='"Liberation Sans","Noto Sans CJK SC",sans-serif' font-weight="bold" textLength="11" lengthAdjust="spacingAndGlyphs">123</text></svg>
<svg class="ic" style="left:425px;top:107px" width="16" height="16" viewBox="0 0 16 16"><rect x="0" y="2" width="1.3" height="10" fill="#000" shape-rendering="crispEdges"/><rect x="7" y="0" width="1.3" height="16" fill="#000" shape-rendering="crispEdges"/><rect x="14" y="2" width="1.3" height="10" fill="#000" shape-rendering="crispEdges"/><rect x="0" y="6" width="15" height="1.2" fill="#000" shape-rendering="crispEdges"/><path d="M1.3 6.6L4 4.6V8.6ZM14 6.6L11.3 4.6V8.6Z" stroke="none" stroke-width="0" fill="#000" /></svg>
<svg class="ic" style="left:459px;top:107px" width="16" height="16" viewBox="0 0 16 16"><rect x="4.5" y="1.5" width="10" height="10" fill="none" stroke="#000" stroke-width="1.1" shape-rendering="crispEdges"/><path d="M2.5 1.5V12M1 1.5H5M1 12H5" stroke="#a0a0a0" stroke-width="1" fill="none" shape-rendering="crispEdges"/><path d="M5.5 14.5H15M5.5 12V16M15 12V16" stroke="#a0a0a0" stroke-width="1" fill="none" shape-rendering="crispEdges"/><path d="M2.5 2L1.5 4H3.5ZM2.5 11.5L1.5 9.5H3.5ZM6 14.5L8 13.5V15.5ZM14.5 14.5L12.5 13.5V15.5Z" stroke="none" stroke-width="0" fill="#909090" /></svg>
<svg class="ic" style="left:482px;top:107px" width="16" height="16" viewBox="0 0 16 16"><path d="M0.5 14.5L2.5 0" stroke="#800000" stroke-width="1.0" fill="none" /><path d="M0.5 14.5L7.5 0.5" stroke="#f00" stroke-width="1.0" fill="none" /><path d="M0.5 14.5L14 1" stroke="#000" stroke-width="1.0" fill="none" /><path d="M0.5 14.5L15 7.5" stroke="#f00" stroke-width="1.0" fill="none" /><path d="M0.5 14.5L15 12.5" stroke="#800000" stroke-width="1.0" fill="none" /><rect x="0" y="13" width="3" height="3" fill="#e00000" /></svg>
<svg class="ic" style="left:505px;top:107px" width="16" height="16" viewBox="0 0 16 16"><rect x="0.8" y="2.8" width="12.4" height="12.4" fill="#fff" stroke="#000" stroke-width="1.2" shape-rendering="crispEdges"/><path d="M0.5 15.5L4.5 0.5" stroke="#800080" stroke-width="1.0" fill="none" /><path d="M0.5 15.5L16 11.5" stroke="#800080" stroke-width="1.0" fill="none" /><path d="M0.5 15.5L9.5 0.5" stroke="#800000" stroke-width="1.0" fill="none" /><path d="M0.5 15.5L16 6.5" stroke="#800000" stroke-width="1.0" fill="none" /><path d="M0.5 15.5L15 1" stroke="#f00" stroke-width="1.0" fill="none" /></svg>
<svg class="ic" style="left:528px;top:107px" width="16" height="16" viewBox="0 0 16 16"><rect x="0.8" y="0.8" width="12.4" height="12.4" fill="#fff" stroke="#000" stroke-width="1.2" shape-rendering="crispEdges"/><path d="M0.5 0.5L5.5 15.5" stroke="#800080" stroke-width="1.0" fill="none" /><path d="M0.5 0.5L16 4" stroke="#800080" stroke-width="1.0" fill="none" /><path d="M0.5 0.5L11.5 15.5" stroke="#800000" stroke-width="1.0" fill="none" /><path d="M0.5 0.5L16 10.5" stroke="#800000" stroke-width="1.0" fill="none" /><path d="M0.5 0.5L15.5 15.5" stroke="#f00" stroke-width="1.0" fill="none" /></svg>
<svg class="ic" style="left:551px;top:107px" width="16" height="16" viewBox="0 0 16 16"><path d="M0 15.5L15.5 0" stroke="#000" stroke-width="1.0" fill="none" /><path d="M0 15.5L15.5 7.5" stroke="#000" stroke-width="1.0" fill="none" /><path d="M0 15.5L15.5 11.5" stroke="#000" stroke-width="1.0" fill="none" /><path d="M0 15.5L5 12.5L5 14Z" stroke="none" stroke-width="0" fill="#000" /></svg>
<svg class="ic" style="left:574px;top:107px" width="16" height="16" viewBox="0 0 16 16"><path d="M0 2L6 14.5L11.5 5.5L14.5 10" stroke="#000" stroke-width="1.4" fill="none" /><path d="M0 14.5H15" stroke="#808080" stroke-width="1" fill="none" stroke-dasharray="1 1" shape-rendering="crispEdges"/></svg>
<svg class="ic" style="left:597px;top:107px" width="16" height="16" viewBox="0 0 16 16"><rect x="0" y="0" width="14.2" height="14.2" fill="#808080" shape-rendering="crispEdges"/><rect x="0.9" y="0.9" width="1.7" height="1.7" fill="#fff" shape-rendering="crispEdges"/><rect x="0.9" y="3.6" width="1.7" height="1.7" fill="#fff" shape-rendering="crispEdges"/><rect x="0.9" y="6.300000000000001" width="1.7" height="1.7" fill="#fff" shape-rendering="crispEdges"/><rect x="0.9" y="9.000000000000002" width="1.7" height="1.7" fill="#fff" shape-rendering="crispEdges"/><rect x="0.9" y="11.700000000000001" width="1.7" height="1.7" fill="#fff" shape-rendering="crispEdges"/><rect x="3.6" y="0.9" width="1.7" height="1.7" fill="#fff" shape-rendering="crispEdges"/><rect x="3.6" y="3.6" width="1.7" height="1.7" fill="#fff" shape-rendering="crispEdges"/><rect x="3.6" y="6.300000000000001" width="1.7" height="1.7" fill="#fff" shape-rendering="crispEdges"/><rect x="3.6" y="9.000000000000002" width="1.7" height="1.7" fill="#fff" shape-rendering="crispEdges"/><rect x="3.6" y="11.700000000000001" width="1.7" height="1.7" fill="#fff" shape-rendering="crispEdges"/><rect x="6.300000000000001" y="0.9" width="1.7" height="1.7" fill="#fff" shape-rendering="crispEdges"/><rect x="6.300000000000001" y="3.6" width="1.7" height="1.7" fill="#fff" shape-rendering="crispEdges"/><rect x="6.300000000000001" y="6.300000000000001" width="1.7" height="1.7" fill="#fff" shape-rendering="crispEdges"/><rect x="6.300000000000001" y="9.000000000000002" width="1.7" height="1.7" fill="#fff" shape-rendering="crispEdges"/><rect x="6.300000000000001" y="11.700000000000001" width="1.7" height="1.7" fill="#fff" shape-rendering="crispEdges"/><rect x="9.000000000000002" y="0.9" width="1.7" height="1.7" fill="#fff" shape-rendering="crispEdges"/><rect x="9.000000000000002" y="3.6" width="1.7" height="1.7" fill="#fff" shape-rendering="crispEdges"/><rect x="9.000000000000002" y="6.300000000000001" width="1.7" height="1.7" fill="#fff" shape-rendering="crispEdges"/><rect x="9.000000000000002" y="9.000000000000002" width="1.7" height="1.7" fill="#fff" shape-rendering="crispEdges"/><rect x="9.000000000000002" y="11.700000000000001" width="1.7" height="1.7" fill="#fff" shape-rendering="crispEdges"/><rect x="11.700000000000001" y="0.9" width="1.7" height="1.7" fill="#fff" shape-rendering="crispEdges"/><rect x="11.700000000000001" y="3.6" width="1.7" height="1.7" fill="#fff" shape-rendering="crispEdges"/><rect x="11.700000000000001" y="6.300000000000001" width="1.7" height="1.7" fill="#fff" shape-rendering="crispEdges"/><rect x="11.700000000000001" y="9.000000000000002" width="1.7" height="1.7" fill="#fff" shape-rendering="crispEdges"/><rect x="11.700000000000001" y="11.700000000000001" width="1.7" height="1.7" fill="#fff" shape-rendering="crispEdges"/><rect x="-0.1" y="2.6" width="1.1" height="1.1" fill="#f00" /><rect x="-0.1" y="5.300000000000001" width="1.1" height="1.1" fill="#f00" /><rect x="-0.1" y="8.000000000000002" width="1.1" height="1.1" fill="#f00" /><rect x="-0.1" y="10.700000000000001" width="1.1" height="1.1" fill="#f00" /><rect x="2.6" y="-0.1" width="1.1" height="1.1" fill="#f00" /><rect x="2.6" y="5.300000000000001" width="1.1" height="1.1" fill="#f00" /><rect x="2.6" y="8.000000000000002" width="1.1" height="1.1" fill="#f00" /><rect x="2.6" y="13.4" width="1.1" height="1.1" fill="#f00" /><rect x="5.300000000000001" y="-0.1" width="1.1" height="1.1" fill="#f00" /><rect x="5.300000000000001" y="2.6" width="1.1" height="1.1" fill="#f00" /><rect x="5.300000000000001" y="5.300000000000001" width="1.1" height="1.1" fill="#f00" /><rect x="5.300000000000001" y="8.000000000000002" width="1.1" height="1.1" fill="#f00" /><rect x="5.300000000000001" y="10.700000000000001" width="1.1" height="1.1" fill="#f00" /><rect x="5.300000000000001" y="13.4" width="1.1" height="1.1" fill="#f00" /><rect x="8.000000000000002" y="-0.1" width="1.1" height="1.1" fill="#f00" /><rect x="8.000000000000002" y="2.6" width="1.1" height="1.1" fill="#f00" /><rect x="8.000000000000002" y="5.300000000000001" width="1.1" height="1.1" fill="#f00" /><rect x="8.000000000000002" y="8.000000000000002" width="1.1" height="1.1" fill="#f00" /><rect x="8.000000000000002" y="10.700000000000001" width="1.1" height="1.1" fill="#f00" /><rect x="8.000000000000002" y="13.4" width="1.1" height="1.1" fill="#f00" /><rect x="10.700000000000001" y="-0.1" width="1.1" height="1.1" fill="#f00" /><rect x="10.700000000000001" y="5.300000000000001" width="1.1" height="1.1" fill="#f00" /><rect x="10.700000000000001" y="8.000000000000002" width="1.1" height="1.1" fill="#f00" /><rect x="10.700000000000001" y="13.4" width="1.1" height="1.1" fill="#f00" /><rect x="13.4" y="2.6" width="1.1" height="1.1" fill="#f00" /><rect x="13.4" y="5.300000000000001" width="1.1" height="1.1" fill="#f00" /><rect x="13.4" y="8.000000000000002" width="1.1" height="1.1" fill="#f00" /><rect x="13.4" y="10.700000000000001" width="1.1" height="1.1" fill="#f00" /></svg>
<svg class="ic" style="left:620px;top:107px" width="16" height="16" viewBox="0 0 16 16"><rect x="2" y="0" width="14.2" height="14.2" fill="#808080" shape-rendering="crispEdges"/><rect x="2.9" y="0.9" width="1.7" height="1.7" fill="#fff" shape-rendering="crispEdges"/><rect x="2.9" y="3.6" width="1.7" height="1.7" fill="#fff" shape-rendering="crispEdges"/><rect x="2.9" y="6.300000000000001" width="1.7" height="1.7" fill="#fff" shape-rendering="crispEdges"/><rect x="2.9" y="9.000000000000002" width="1.7" height="1.7" fill="#fff" shape-rendering="crispEdges"/><rect x="2.9" y="11.700000000000001" width="1.7" height="1.7" fill="#fff" shape-rendering="crispEdges"/><rect x="5.6" y="0.9" width="1.7" height="1.7" fill="#fff" shape-rendering="crispEdges"/><rect x="5.6" y="3.6" width="1.7" height="1.7" fill="#fff" shape-rendering="crispEdges"/><rect x="5.6" y="6.300000000000001" width="1.7" height="1.7" fill="#fff" shape-rendering="crispEdges"/><rect x="5.6" y="9.000000000000002" width="1.7" height="1.7" fill="#fff" shape-rendering="crispEdges"/><rect x="5.6" y="11.700000000000001" width="1.7" height="1.7" fill="#fff" shape-rendering="crispEdges"/><rect x="8.3" y="0.9" width="1.7" height="1.7" fill="#fff" shape-rendering="crispEdges"/><rect x="8.3" y="3.6" width="1.7" height="1.7" fill="#fff" shape-rendering="crispEdges"/><rect x="8.3" y="6.300000000000001" width="1.7" height="1.7" fill="#fff" shape-rendering="crispEdges"/><rect x="8.3" y="9.000000000000002" width="1.7" height="1.7" fill="#fff" shape-rendering="crispEdges"/><rect x="8.3" y="11.700000000000001" width="1.7" height="1.7" fill="#fff" shape-rendering="crispEdges"/><rect x="11.000000000000002" y="0.9" width="1.7" height="1.7" fill="#fff" shape-rendering="crispEdges"/><rect x="11.000000000000002" y="3.6" width="1.7" height="1.7" fill="#fff" shape-rendering="crispEdges"/><rect x="11.000000000000002" y="6.300000000000001" width="1.7" height="1.7" fill="#fff" shape-rendering="crispEdges"/><rect x="11.000000000000002" y="9.000000000000002" width="1.7" height="1.7" fill="#fff" shape-rendering="crispEdges"/><rect x="11.000000000000002" y="11.700000000000001" width="1.7" height="1.7" fill="#fff" shape-rendering="crispEdges"/><rect x="13.700000000000001" y="0.9" width="1.7" height="1.7" fill="#fff" shape-rendering="crispEdges"/><rect x="13.700000000000001" y="3.6" width="1.7" height="1.7" fill="#fff" shape-rendering="crispEdges"/><rect x="13.700000000000001" y="6.300000000000001" width="1.7" height="1.7" fill="#fff" shape-rendering="crispEdges"/><rect x="13.700000000000001" y="9.000000000000002" width="1.7" height="1.7" fill="#fff" shape-rendering="crispEdges"/><rect x="13.700000000000001" y="11.700000000000001" width="1.7" height="1.7" fill="#fff" shape-rendering="crispEdges"/><rect x="1.9" y="2.6" width="1.1" height="1.1" fill="#f00" /><rect x="1.9" y="5.300000000000001" width="1.1" height="1.1" fill="#f00" /><rect x="1.9" y="8.000000000000002" width="1.1" height="1.1" fill="#f00" /><rect x="1.9" y="10.700000000000001" width="1.1" height="1.1" fill="#f00" /><rect x="4.6" y="-0.1" width="1.1" height="1.1" fill="#f00" /><rect x="4.6" y="5.300000000000001" width="1.1" height="1.1" fill="#f00" /><rect x="4.6" y="8.000000000000002" width="1.1" height="1.1" fill="#f00" /><rect x="4.6" y="13.4" width="1.1" height="1.1" fill="#f00" /><rect x="7.300000000000001" y="-0.1" width="1.1" height="1.1" fill="#f00" /><rect x="7.300000000000001" y="2.6" width="1.1" height="1.1" fill="#f00" /><rect x="7.300000000000001" y="5.300000000000001" width="1.1" height="1.1" fill="#f00" /><rect x="7.300000000000001" y="8.000000000000002" width="1.1" height="1.1" fill="#f00" /><rect x="7.300000000000001" y="10.700000000000001" width="1.1" height="1.1" fill="#f00" /><rect x="7.300000000000001" y="13.4" width="1.1" height="1.1" fill="#f00" /><rect x="10.000000000000002" y="-0.1" width="1.1" height="1.1" fill="#f00" /><rect x="10.000000000000002" y="2.6" width="1.1" height="1.1" fill="#f00" /><rect x="10.000000000000002" y="5.300000000000001" width="1.1" height="1.1" fill="#f00" /><rect x="10.000000000000002" y="8.000000000000002" width="1.1" height="1.1" fill="#f00" /><rect x="10.000000000000002" y="10.700000000000001" width="1.1" height="1.1" fill="#f00" /><rect x="10.000000000000002" y="13.4" width="1.1" height="1.1" fill="#f00" /><rect x="12.700000000000001" y="-0.1" width="1.1" height="1.1" fill="#f00" /><rect x="12.700000000000001" y="5.300000000000001" width="1.1" height="1.1" fill="#f00" /><rect x="12.700000000000001" y="8.000000000000002" width="1.1" height="1.1" fill="#f00" /><rect x="12.700000000000001" y="13.4" width="1.1" height="1.1" fill="#f00" /><rect x="15.4" y="2.6" width="1.1" height="1.1" fill="#f00" /><rect x="15.4" y="5.300000000000001" width="1.1" height="1.1" fill="#f00" /><rect x="15.4" y="8.000000000000002" width="1.1" height="1.1" fill="#f00" /><rect x="15.4" y="10.700000000000001" width="1.1" height="1.1" fill="#f00" /><rect x="1" y="1" width="1.3" height="14.5" fill="#000" shape-rendering="crispEdges"/><rect x="1" y="14.2" width="14" height="1.3" fill="#000" shape-rendering="crispEdges"/><path d="M1.6 0L0 2.5H3.3ZM16 14.8L13.5 13V16.6Z" stroke="none" stroke-width="0" fill="#000" /></svg>
<svg class="ic" style="left:643px;top:107px" width="16" height="16" viewBox="0 0 16 16"><rect x="0" y="0" width="1" height="15" fill="#909090" shape-rendering="crispEdges"/><rect x="10.5" y="0" width="1" height="15" fill="#909090" shape-rendering="crispEdges"/><path d="M0 6.5L14.5 0" stroke="#000" stroke-width="1.0" fill="none" /><path d="M0 10.5L14.5 4" stroke="#000" stroke-width="1.0" fill="none" /><path d="M0 14.5L14.5 8" stroke="#000" stroke-width="1.0" fill="none" /></svg>
<svg class="ic" style="left:676px;top:107px" width="16" height="16" viewBox="0 0 16 16"><rect x="9" y="1" width="1.3" height="14" fill="#000" shape-rendering="crispEdges"/><rect x="0" y="1.3" width="9" height="1.1" fill="#000" shape-rendering="crispEdges"/><rect x="0" y="3.8" width="9" height="1.1" fill="#000" shape-rendering="crispEdges"/><rect x="0" y="6.3" width="9" height="1.1" fill="#000" shape-rendering="crispEdges"/><rect x="0" y="8.8" width="9" height="1.1" fill="#000" shape-rendering="crispEdges"/><rect x="0" y="11.3" width="9" height="1.1" fill="#000" shape-rendering="crispEdges"/><rect x="0" y="13.8" width="9" height="1.1" fill="#000" shape-rendering="crispEdges"/><text x="10.5" y="6" font-size="6" fill="#000" font-family='"Liberation Sans","Noto Sans CJK SC",sans-serif' font-weight="bold" >3</text><text x="10.5" y="11.5" font-size="6" fill="#000" font-family='"Liberation Sans","Noto Sans CJK SC",sans-serif' font-weight="bold" >1</text><rect x="10" y="13.5" width="4" height="1.3" fill="#000" shape-rendering="crispEdges"/><rect x="13" y="11" width="1.2" height="4" fill="#000" shape-rendering="crispEdges"/></svg>
<svg class="ic" style="left:699px;top:107px" width="16" height="16" viewBox="0 0 16 16"><rect x="0" y="0" width="16" height="1.3" fill="#f00" shape-rendering="crispEdges"/><rect x="8" y="6" width="8" height="1.3" fill="#f00" shape-rendering="crispEdges"/><rect x="0" y="15" width="6" height="1.3" fill="#f00" shape-rendering="crispEdges"/><path d="M2 15.5L8 1L12 5.5L15.5 1.5" stroke="#000" stroke-width="1.2" fill="none" /><text x="11.5" y="16" font-size="10.5" fill="#f00" font-family='"Liberation Sans","Noto Sans CJK SC",sans-serif' font-weight="bold" text-anchor="middle">%</text></svg>
<svg class="ic" style="left:722px;top:107px" width="16" height="16" viewBox="0 0 16 16"><text x="7.3" y="13.8" font-size="15.5" fill="#000" font-family='"Liberation Sans","Noto Sans CJK SC",sans-serif' text-anchor="middle">%</text></svg>
<svg class="ic" style="left:745px;top:107px" width="16" height="16" viewBox="0 0 16 16"><rect x="0" y="0" width="16" height="1.3" fill="#000" shape-rendering="crispEdges"/><rect x="7" y="3" width="9" height="1.3" fill="#000" shape-rendering="crispEdges"/><rect x="9" y="8" width="7" height="1.3" fill="#000" shape-rendering="crispEdges"/><rect x="0" y="15" width="16" height="1.3" fill="#000" shape-rendering="crispEdges"/><text x="4.5" y="14" font-size="11" fill="#f00" font-family='"Liberation Sans","Noto Sans CJK SC",sans-serif' font-weight="bold" text-anchor="middle">%</text></svg>
<svg class="ic" style="left:768px;top:107px" width="16" height="16" viewBox="0 0 16 16"><circle cx="7.5" cy="7.8" r="7.5" fill="#fff" stroke="#a0a0a0" stroke-width="1"/><text x="7.5" y="12.5" font-size="11" fill="#808000" font-family='"Liberation Sans","Noto Sans CJK SC",sans-serif' font-weight="500" text-anchor="middle">金</text></svg>
<svg class="ic" style="left:791px;top:107px" width="16" height="16" viewBox="0 0 16 16"><rect x="0" y="0" width="16" height="1.3" fill="#000" shape-rendering="crispEdges"/><rect x="7" y="3" width="9" height="1.3" fill="#000" shape-rendering="crispEdges"/><rect x="9" y="8.5" width="7" height="1.3" fill="#000" shape-rendering="crispEdges"/><rect x="0" y="15" width="16" height="1.3" fill="#000" shape-rendering="crispEdges"/><text x="4.5" y="13.5" font-size="9.5" fill="#808000" font-family='"Liberation Sans","Noto Sans CJK SC",sans-serif' font-weight="500" text-anchor="middle">金</text></svg>
<svg class="ic" style="left:814px;top:107px" width="16" height="16" viewBox="0 0 16 16"><rect x="2" y="0" width="1.3" height="16" fill="#000" shape-rendering="crispEdges"/><rect x="0" y="15" width="6" height="1.3" fill="#000" shape-rendering="crispEdges"/><rect x="0.10000000000000009" y="2" width="5" height="1.1" fill="#000" shape-rendering="crispEdges"/><rect x="1.1" y="4.5" width="3" height="1.1" fill="#000" shape-rendering="crispEdges"/><rect x="1.1" y="6.5" width="3" height="1.1" fill="#000" shape-rendering="crispEdges"/><rect x="0.10000000000000009" y="9" width="5" height="1.1" fill="#000" shape-rendering="crispEdges"/><rect x="1.1" y="12" width="3" height="1.1" fill="#000" shape-rendering="crispEdges"/><g transform="translate(5.5,1) scale(0.68)"><path d="M8.9 2.5L10.5 0.1H12.8L12.5 1.5L13.8 1.8L14.9 0.9V7L14.4 8.3Z" stroke="none" stroke-width="0" fill="#f00" /><path d="M7.9 3.3L14.4 8.3V10.6L8.3 12.4L5.5 10L6.5 5.4Z" stroke="#000" stroke-width="0.9" fill="#b4b4b4" /><path d="M9 5.5L7.5 10.5" stroke="#ececec" stroke-width="2.2" fill="none" /><path d="M11 7.5L10 11" stroke="#d8d8d8" stroke-width="1.2" fill="none" /><path d="M10.5 0.1L6.7 4.6L5.3 9.5" stroke="#000" stroke-width="1" fill="none" /><path d="M5.1 10.6L7.8 12.5L6.7 13.6L4.1 14.2Z" stroke="none" stroke-width="0" fill="#f00" /><path d="M4.3 14L3.3 15.7L0.2 12.2" stroke="#000" stroke-width="1.1" fill="none" /></g></svg>
<svg class="ic" style="left:837px;top:107px" width="16" height="16" viewBox="0 0 16 16"><rect x="0" y="0" width="16" height="1.3" fill="#f00" shape-rendering="crispEdges"/><rect x="0" y="15" width="16" height="1.3" fill="#f00" shape-rendering="crispEdges"/><rect x="0" y="7.5" width="16" height="1.2" fill="#000" shape-rendering="crispEdges"/><path d="M0.5 13Q3 2 5 2T9 12T11.5 13T15.5 2" stroke="#808080" stroke-width="1.1" fill="none" /></svg>
<svg class="ic" style="left:860px;top:107px" width="16" height="16" viewBox="0 0 16 16"><rect x="0" y="0" width="16" height="1.3" fill="#f00" shape-rendering="crispEdges"/><rect x="0" y="15" width="16" height="1.3" fill="#f00" shape-rendering="crispEdges"/><text x="8" y="12.5" font-size="11.5" fill="#808000" font-family='"Liberation Sans","Noto Sans CJK SC",sans-serif' font-weight="500" text-anchor="middle">金</text></svg>
<svg class="ic" style="left:883px;top:107px" width="16" height="16" viewBox="0 0 16 16"><path d="M0 15.5L16 0" stroke="#000" stroke-width="1.1" fill="none" /><rect x="8.5" y="7" width="7" height="1" fill="#000" shape-rendering="crispEdges"/><rect x="5" y="11" width="10.5" height="1" fill="#000" shape-rendering="crispEdges"/><rect x="1.5" y="14.5" width="14" height="1" fill="#000" shape-rendering="crispEdges"/><text x="3" y="8.5" font-size="11" fill="#f00" font-family='"Liberation Sans","Noto Sans CJK SC",sans-serif' font-weight="normal" text-anchor="middle">J</text></svg>
<svg class="ic" style="left:906px;top:107px" width="16" height="16" viewBox="0 0 16 16"><path d="M0 15.5L16 0" stroke="#000" stroke-width="1.1" fill="none" /><rect x="8.5" y="7" width="7" height="1" fill="#000" shape-rendering="crispEdges"/><rect x="5" y="11" width="10.5" height="1" fill="#000" shape-rendering="crispEdges"/><rect x="1.5" y="14.5" width="14" height="1" fill="#000" shape-rendering="crispEdges"/><text x="4" y="9" font-size="12" fill="#f00" font-family='"Liberation Sans","Noto Sans CJK SC",sans-serif' font-weight="bold" text-anchor="middle">F</text></svg>
<svg class="ic" style="left:929px;top:107px" width="16" height="16" viewBox="0 0 16 16"><path d="M0 15.5L16 0" stroke="#000" stroke-width="1.1" fill="none" /><rect x="8.5" y="7" width="7" height="1" fill="#000" shape-rendering="crispEdges"/><rect x="5" y="11" width="10.5" height="1" fill="#000" shape-rendering="crispEdges"/><rect x="1.5" y="14.5" width="14" height="1" fill="#000" shape-rendering="crispEdges"/><text x="4.5" y="9" font-size="9.5" fill="#808000" font-family='"Liberation Sans","Noto Sans CJK SC",sans-serif' font-weight="500" text-anchor="middle">金</text></svg>
<svg class="ic" style="left:952px;top:107px" width="16" height="16" viewBox="0 0 16 16"><path d="M0 15.5L16 0" stroke="#000" stroke-width="1.1" fill="none" /><rect x="8.5" y="7" width="7" height="1" fill="#000" shape-rendering="crispEdges"/><rect x="5" y="11" width="10.5" height="1" fill="#000" shape-rendering="crispEdges"/><rect x="1.5" y="14.5" width="14" height="1" fill="#000" shape-rendering="crispEdges"/><text x="4.5" y="9" font-size="10" fill="#f00" font-family='"Liberation Sans","Noto Sans CJK SC",sans-serif' font-weight="500" text-anchor="middle">神</text></svg>
<svg class="ic" style="left:975px;top:107px" width="16" height="16" viewBox="0 0 16 16"><path d="M0 15.5L16 0" stroke="#000" stroke-width="1.1" fill="none" /><rect x="8.5" y="7" width="7" height="1" fill="#000" shape-rendering="crispEdges"/><rect x="5" y="11" width="10.5" height="1" fill="#000" shape-rendering="crispEdges"/><rect x="1.5" y="14.5" width="14" height="1" fill="#000" shape-rendering="crispEdges"/><text x="5" y="9.5" font-size="10" fill="#f00" font-family='"Liberation Sans","Noto Sans CJK SC",sans-serif' font-weight="500" text-anchor="middle">赢</text></svg>
<svg class="ic" style="left:998px;top:107px" width="16" height="16" viewBox="0 0 16 16"><path d="M0 15.5L16 0" stroke="#000" stroke-width="1.1" fill="none" /><rect x="8.5" y="7" width="7" height="1" fill="#000" shape-rendering="crispEdges"/><rect x="5" y="11" width="10.5" height="1" fill="#000" shape-rendering="crispEdges"/><rect x="1.5" y="14.5" width="14" height="1" fill="#000" shape-rendering="crispEdges"/><text x="4.5" y="8" font-size="9" fill="#f00" font-family='"Liberation Sans","Noto Sans CJK SC",sans-serif' font-weight="500" text-anchor="middle">四</text></svg>
<svg width="1230" height="683" viewBox="0 0 1230 683" style="position:absolute;left:0;top:0" shape-rendering="crispEdges">
<rect x="0" y="128" width="1230" height="555" fill="#000"/>
<text x="70.5" y="138" font-size="9.5" fill="#909090" font-family='"Liberation Sans","Noto Sans CJK SC",sans-serif' textLength="19.400000000000002" lengthAdjust="spacingAndGlyphs" >12-16</text>
<text x="130" y="138" font-size="9.5" fill="#909090" font-family='"Liberation Sans","Noto Sans CJK SC",sans-serif' textLength="21.0" lengthAdjust="spacingAndGlyphs" >12-30</text>
<text x="200" y="138" font-size="9.5" fill="#909090" font-family='"Liberation Sans","Noto Sans CJK SC",sans-serif' textLength="19.400000000000002" lengthAdjust="spacingAndGlyphs" >01-14</text>
<text x="270" y="138" font-size="9.5" fill="#909090" font-family='"Liberation Sans","Noto Sans CJK SC",sans-serif' textLength="21.0" lengthAdjust="spacingAndGlyphs" >01-28</text>
<text x="340" y="138" font-size="9.5" fill="#909090" font-family='"Liberation Sans","Noto Sans CJK SC",sans-serif' textLength="21.0" lengthAdjust="spacingAndGlyphs" >02-18</text>
<text x="410" y="138" font-size="9.5" fill="#909090" font-family='"Liberation Sans","Noto Sans CJK SC",sans-serif' textLength="22.6" lengthAdjust="spacingAndGlyphs" >03-04</text>
<text x="480" y="138" font-size="9.5" fill="#909090" font-family='"Liberation Sans","Noto Sans CJK SC",sans-serif' textLength="21.0" lengthAdjust="spacingAndGlyphs" >03-18</text>
<text x="550" y="138" font-size="9.5" fill="#909090" font-family='"Liberation Sans","Noto Sans CJK SC",sans-serif' textLength="21.0" lengthAdjust="spacingAndGlyphs" >04-01</text>
<text x="620" y="138" font-size="9.5" fill="#909090" font-family='"Liberation Sans","Noto Sans CJK SC",sans-serif' textLength="21.0" lengthAdjust="spacingAndGlyphs" >04-16</text>
<text x="690" y="138" font-size="9.5" fill="#909090" font-family='"Liberation Sans","Noto Sans CJK SC",sans-serif' textLength="22.6" lengthAdjust="spacingAndGlyphs" >04-30</text>
<text x="760" y="138" font-size="9.5" fill="#909090" font-family='"Liberation Sans","Noto Sans CJK SC",sans-serif' textLength="21.0" lengthAdjust="spacingAndGlyphs" >05-16</text>
<text x="830" y="138" font-size="9.5" fill="#909090" font-family='"Liberation Sans","Noto Sans CJK SC",sans-serif' textLength="22.6" lengthAdjust="spacingAndGlyphs" >05-30</text>
<text x="900" y="138" font-size="9.5" fill="#909090" font-family='"Liberation Sans","Noto Sans CJK SC",sans-serif' textLength="21.0" lengthAdjust="spacingAndGlyphs" >06-16</text>
<text x="970" y="138" font-size="9.5" fill="#909090" font-family='"Liberation Sans","Noto Sans CJK SC",sans-serif' textLength="22.6" lengthAdjust="spacingAndGlyphs" >06-30</text>
<text x="1040" y="138" font-size="9.5" fill="#909090" font-family='"Liberation Sans","Noto Sans CJK SC",sans-serif' textLength="21.0" lengthAdjust="spacingAndGlyphs" >07-14</text>
<text x="1110" y="138" font-size="9.5" fill="#909090" font-family='"Liberation Sans","Noto Sans CJK SC",sans-serif' textLength="22.6" lengthAdjust="spacingAndGlyphs" >07-28</text>
<text x="1180" y="138" font-size="9.5" fill="#909090" font-family='"Liberation Sans","Noto Sans CJK SC",sans-serif' textLength="9.5" lengthAdjust="spacingAndGlyphs" >08</text>
<rect x="70" y="140" width="1160" height="1" fill="#909090"/>
<rect x="1184" y="128" width="46" height="12" fill="#f00"/>
<text x="1184.8" y="138.5" font-size="12" fill="#fff" font-family='"Liberation Sans","Noto Sans CJK SC",sans-serif' textLength="54" lengthAdjust="spacingAndGlyphs" >2014-08-22</text>
<text x="4" y="145.5" font-size="12" fill="#ff0" font-family='"Liberation Serif","Noto Serif CJK SC",serif' textLength="30" lengthAdjust="spacingAndGlyphs" font-weight="bold" >日K线</text>
<text x="70.5" y="153" font-size="13" fill="#fff" font-family='"Liberation Serif","Noto Serif CJK SC",serif' textLength="51.5" lengthAdjust="spacingAndGlyphs" font-weight="500" stroke="#fff" stroke-width=".2">极反通道</text>
<text x="141.5" y="154" font-size="12" fill="#f00" font-family='"Liberation Sans","Noto Sans CJK SC",sans-serif' textLength="69" lengthAdjust="spacingAndGlyphs" stroke="#f00" stroke-width=".18">Tp=2109.1746</text>
<text x="220" y="154" font-size="12" fill="#ff0" font-family='"Liberation Sans","Noto Sans CJK SC",sans-serif' textLength="70" lengthAdjust="spacingAndGlyphs" stroke="#ff0" stroke-width=".18">Up=2085.0744</text>
<text x="299" y="154" font-size="12" fill="#fff" font-family='"Liberation Sans","Noto Sans CJK SC",sans-serif' textLength="71" lengthAdjust="spacingAndGlyphs" stroke="#fff" stroke-width=".18">Md=2057.9363</text>
<text x="378" y="154" font-size="12" fill="#ff0" font-family='"Liberation Sans","Noto Sans CJK SC",sans-serif' textLength="70" lengthAdjust="spacingAndGlyphs" stroke="#ff0" stroke-width=".18">Dn=2021.0067</text>
<text x="457" y="154" font-size="12" fill="#f00" font-family='"Liberation Sans","Noto Sans CJK SC",sans-serif' textLength="66.5" lengthAdjust="spacingAndGlyphs" stroke="#f00" stroke-width=".18">Bt=1987.7002</text>
<text x="1140.5" y="154" font-size="13" fill="#ff0" font-family='"Liberation Mono","Noto Serif CJK SC",monospace' textLength="38.5" lengthAdjust="spacingAndGlyphs" >1A0001</text>
<text x="1187.8" y="154" font-size="13" fill="#ff0" font-family='"Liberation Serif","Noto Serif CJK SC",serif' textLength="54" lengthAdjust="spacingAndGlyphs" >上证指数</text>
<rect x="73" y="273" width="1" height="23" fill="#0ff"/>
<rect x="70" y="275" width="6" height="20" fill="#0ff"/>
<rect x="80" y="294" width="1" height="9" fill="#0ff"/>
<rect x="77" y="295" width="6" height="6" fill="#0ff"/>
<rect x="87" y="299" width="1" height="7" fill="#0ff"/>
<rect x="84" y="301" width="6" height="1" fill="#0ff"/>
<rect x="94" y="297" width="1" height="18" fill="#0ff"/>
<rect x="91" y="299" width="6" height="15" fill="#0ff"/>
<rect x="101" y="313" width="1" height="26" fill="#0ff"/>
<rect x="98" y="313" width="6" height="25" fill="#0ff"/>
<rect x="108" y="329" width="1" height="18" fill="#f00"/>
<rect x="105" y="335" width="6" height="1" fill="#f00"/>
<rect x="115" y="324" width="1" height="16" fill="#0ff"/>
<rect x="112" y="332" width="6" height="1" fill="#0ff"/>
<rect x="122" y="325" width="1" height="2" fill="#f00"/>
<rect x="122" y="332" width="1" height="4" fill="#f00"/>
<rect x="119.5" y="327.5" width="5" height="4" fill="#000" stroke="#f00" stroke-width="1"/>
<rect x="129" y="328" width="1" height="18" fill="#0ff"/>
<rect x="126" y="328" width="6" height="16" fill="#0ff"/>
<rect x="136" y="323" width="1" height="6" fill="#f00"/>
<rect x="136" y="343" width="1" height="3" fill="#f00"/>
<rect x="133.5" y="329.5" width="5" height="13" fill="#000" stroke="#f00" stroke-width="1"/>
<rect x="143" y="324" width="1" height="8" fill="#0ff"/>
<rect x="140" y="324" width="6" height="7" fill="#0ff"/>
<rect x="150" y="318" width="1" height="2" fill="#f00"/>
<rect x="150" y="333" width="1" height="3" fill="#f00"/>
<rect x="147.5" y="320.5" width="5" height="12" fill="#000" stroke="#f00" stroke-width="1"/>
<rect x="157" y="323" width="1" height="6" fill="#0ff"/>
<rect x="154" y="323" width="6" height="1" fill="#0ff"/>
<rect x="164" y="328" width="1" height="15" fill="#0ff"/>
<rect x="161" y="328" width="6" height="11" fill="#0ff"/>
<rect x="171" y="341" width="1" height="25" fill="#0ff"/>
<rect x="168" y="341" width="6" height="18" fill="#0ff"/>
<rect x="178" y="356" width="1" height="2" fill="#f00"/>
<rect x="178" y="366" width="1" height="2" fill="#f00"/>
<rect x="175.5" y="358.5" width="5" height="7" fill="#000" stroke="#f00" stroke-width="1"/>
<rect x="185" y="351" width="1" height="13" fill="#0ff"/>
<rect x="182" y="358" width="6" height="1" fill="#0ff"/>
<rect x="192" y="354" width="1" height="16" fill="#0ff"/>
<rect x="189" y="362" width="6" height="6" fill="#0ff"/>
<rect x="199" y="369" width="1" height="11" fill="#0ff"/>
<rect x="196" y="372" width="6" height="5" fill="#0ff"/>
<rect x="206" y="371" width="1" height="13" fill="#0ff"/>
<rect x="203" y="376" width="6" height="3" fill="#0ff"/>
<rect x="213" y="369" width="1" height="1" fill="#f00"/>
<rect x="213" y="381" width="1" height="3" fill="#f00"/>
<rect x="210.5" y="370.5" width="5" height="10" fill="#000" stroke="#f00" stroke-width="1"/>
<rect x="220" y="371" width="1" height="8" fill="#0ff"/>
<rect x="217" y="371" width="6" height="1" fill="#0ff"/>
<rect x="227" y="365" width="1" height="12" fill="#f00"/>
<rect x="224" y="372" width="6" height="1" fill="#f00"/>
<rect x="234" y="375" width="1" height="9" fill="#0ff"/>
<rect x="231" y="375" width="6" height="7" fill="#0ff"/>
<rect x="241" y="382" width="1" height="11" fill="#0ff"/>
<rect x="238" y="384" width="6" height="6" fill="#0ff"/>
<rect x="248" y="377" width="1" height="3" fill="#f00"/>
<rect x="245.5" y="380.5" width="5" height="7" fill="#000" stroke="#f00" stroke-width="1"/>
<rect x="255" y="379" width="1" height="1" fill="#f00"/>
<rect x="252.5" y="356.5" width="5" height="22" fill="#000" stroke="#f00" stroke-width="1"/>
<rect x="262" y="357" width="1" height="6" fill="#0ff"/>
<rect x="259" y="358" width="6" height="3" fill="#0ff"/>
<rect x="269" y="351" width="1" height="5" fill="#f00"/>
<rect x="269" y="363" width="1" height="3" fill="#f00"/>
<rect x="266.5" y="356.5" width="5" height="6" fill="#000" stroke="#f00" stroke-width="1"/>
<rect x="276" y="360" width="1" height="8" fill="#0ff"/>
<rect x="273" y="360" width="6" height="6" fill="#0ff"/>
<rect x="283" y="361" width="1" height="9" fill="#f00"/>
<rect x="280" y="364" width="6" height="1" fill="#f00"/>
<rect x="290" y="356" width="1" height="1" fill="#f00"/>
<rect x="290" y="360" width="1" height="3" fill="#f00"/>
<rect x="287.5" y="357.5" width="5" height="2" fill="#000" stroke="#f00" stroke-width="1"/>
<rect x="297" y="359" width="1" height="8" fill="#0ff"/>
<rect x="294" y="359" width="6" height="7" fill="#0ff"/>
<rect x="304" y="371" width="1" height="6" fill="#f00"/>
<rect x="301.5" y="360.5" width="5" height="10" fill="#000" stroke="#f00" stroke-width="1"/>
<rect x="311" y="336" width="1" height="1" fill="#f00"/>
<rect x="308.5" y="337.5" width="5" height="19" fill="#000" stroke="#f00" stroke-width="1"/>
<rect x="318" y="323" width="1" height="4" fill="#f00"/>
<rect x="318" y="336" width="1" height="3" fill="#f00"/>
<rect x="315.5" y="327.5" width="5" height="8" fill="#000" stroke="#f00" stroke-width="1"/>
<rect x="325" y="323" width="1" height="2" fill="#f00"/>
<rect x="325" y="327" width="1" height="4" fill="#f00"/>
<rect x="322.5" y="325.5" width="5" height="1" fill="#000" stroke="#f00" stroke-width="1"/>
<rect x="332" y="318" width="1" height="13" fill="#0ff"/>
<rect x="329" y="326" width="6" height="3" fill="#0ff"/>
<rect x="339" y="329" width="1" height="3" fill="#f00"/>
<rect x="336.5" y="320.5" width="5" height="8" fill="#000" stroke="#f00" stroke-width="1"/>
<rect x="346" y="309" width="1" height="2" fill="#f00"/>
<rect x="346" y="314" width="1" height="5" fill="#f00"/>
<rect x="343.5" y="311.5" width="5" height="2" fill="#000" stroke="#f00" stroke-width="1"/>
<rect x="353" y="310" width="1" height="12" fill="#0ff"/>
<rect x="350" y="310" width="6" height="9" fill="#0ff"/>
<rect x="360" y="300" width="1" height="6" fill="#f00"/>
<rect x="360" y="320" width="1" height="3" fill="#f00"/>
<rect x="357.5" y="306.5" width="5" height="13" fill="#000" stroke="#f00" stroke-width="1"/>
<rect x="367" y="287" width="1" height="22" fill="#0ff"/>
<rect x="364" y="300" width="6" height="8" fill="#0ff"/>
<rect x="374" y="312" width="1" height="18" fill="#0ff"/>
<rect x="371" y="312" width="6" height="10" fill="#0ff"/>
<rect x="381" y="329" width="1" height="23" fill="#0ff"/>
<rect x="378" y="329" width="6" height="13" fill="#0ff"/>
<rect x="388" y="338" width="1" height="32" fill="#0ff"/>
<rect x="385" y="342" width="6" height="24" fill="#0ff"/>
<rect x="395" y="369" width="1" height="8" fill="#f00"/>
<rect x="392.5" y="362.5" width="5" height="6" fill="#000" stroke="#f00" stroke-width="1"/>
<rect x="402" y="347" width="1" height="18" fill="#f00"/>
<rect x="399" y="358" width="6" height="1" fill="#f00"/>
<rect x="409" y="352" width="1" height="1" fill="#f00"/>
<rect x="409" y="361" width="1" height="12" fill="#f00"/>
<rect x="406.5" y="353.5" width="5" height="7" fill="#000" stroke="#f00" stroke-width="1"/>
<rect x="416" y="341" width="1" height="3" fill="#f00"/>
<rect x="416" y="355" width="1" height="4" fill="#f00"/>
<rect x="413.5" y="344.5" width="5" height="10" fill="#000" stroke="#f00" stroke-width="1"/>
<rect x="423" y="344" width="1" height="13" fill="#f00"/>
<rect x="420" y="346" width="6" height="1" fill="#f00"/>
<rect x="430" y="344" width="1" height="13" fill="#0ff"/>
<rect x="427" y="344" width="6" height="11" fill="#0ff"/>
<rect x="437" y="349" width="1" height="3" fill="#f00"/>
<rect x="437" y="356" width="1" height="12" fill="#f00"/>
<rect x="434.5" y="352.5" width="5" height="3" fill="#000" stroke="#f00" stroke-width="1"/>
<rect x="444" y="342" width="1" height="15" fill="#0ff"/>
<rect x="441" y="352" width="6" height="1" fill="#0ff"/>
<rect x="451" y="361" width="1" height="26" fill="#0ff"/>
<rect x="448" y="361" width="6" height="24" fill="#0ff"/>
<rect x="458" y="380" width="1" height="4" fill="#f00"/>
<rect x="458" y="387" width="1" height="5" fill="#f00"/>
<rect x="455.5" y="384.5" width="5" height="2" fill="#000" stroke="#f00" stroke-width="1"/>
<rect x="465" y="379" width="1" height="20" fill="#f00"/>
<rect x="462" y="386" width="6" height="1" fill="#f00"/>
<rect x="472" y="369" width="1" height="5" fill="#f00"/>
<rect x="472" y="384" width="1" height="3" fill="#f00"/>
<rect x="469.5" y="374.5" width="5" height="9" fill="#000" stroke="#f00" stroke-width="1"/>
<rect x="479" y="376" width="1" height="14" fill="#0ff"/>
<rect x="476" y="380" width="6" height="2" fill="#0ff"/>
<rect x="486" y="371" width="1" height="1" fill="#f00"/>
<rect x="486" y="379" width="1" height="6" fill="#f00"/>
<rect x="483.5" y="372.5" width="5" height="6" fill="#000" stroke="#f00" stroke-width="1"/>
<rect x="493" y="366" width="1" height="7" fill="#0ff"/>
<rect x="490" y="369" width="6" height="1" fill="#0ff"/>
<rect x="500" y="372" width="1" height="11" fill="#f00"/>
<rect x="497" y="373" width="6" height="1" fill="#f00"/>
<rect x="507" y="369" width="1" height="20" fill="#0ff"/>
<rect x="504" y="375" width="6" height="13" fill="#0ff"/>
<rect x="514" y="356" width="1" height="2" fill="#f00"/>
<rect x="511.5" y="358.5" width="5" height="32" fill="#000" stroke="#f00" stroke-width="1"/>
<rect x="521" y="344" width="1" height="4" fill="#f00"/>
<rect x="521" y="357" width="1" height="4" fill="#f00"/>
<rect x="518.5" y="348.5" width="5" height="8" fill="#000" stroke="#f00" stroke-width="1"/>
<rect x="528" y="341" width="1" height="6" fill="#f00"/>
<rect x="528" y="349" width="1" height="4" fill="#f00"/>
<rect x="525.5" y="347.5" width="5" height="1" fill="#000" stroke="#f00" stroke-width="1"/>
<rect x="535" y="344" width="1" height="9" fill="#0ff"/>
<rect x="532" y="346" width="6" height="3" fill="#0ff"/>
<rect x="542" y="345" width="1" height="16" fill="#0ff"/>
<rect x="539" y="351" width="6" height="7" fill="#0ff"/>
<rect x="549" y="352" width="1" height="13" fill="#0ff"/>
<rect x="546" y="359" width="6" height="3" fill="#0ff"/>
<rect x="556" y="359" width="1" height="12" fill="#0ff"/>
<rect x="553" y="361" width="6" height="5" fill="#0ff"/>
<rect x="563" y="368" width="1" height="1" fill="#f00"/>
<rect x="560.5" y="358.5" width="5" height="9" fill="#000" stroke="#f00" stroke-width="1"/>
<rect x="570" y="351" width="1" height="1" fill="#f00"/>
<rect x="570" y="355" width="1" height="4" fill="#f00"/>
<rect x="567.5" y="352.5" width="5" height="2" fill="#000" stroke="#f00" stroke-width="1"/>
<rect x="577" y="349" width="1" height="15" fill="#0ff"/>
<rect x="574" y="349" width="6" height="10" fill="#0ff"/>
<rect x="584" y="351" width="1" height="2" fill="#f00"/>
<rect x="584" y="364" width="1" height="1" fill="#f00"/>
<rect x="581.5" y="353.5" width="5" height="10" fill="#000" stroke="#f00" stroke-width="1"/>
<rect x="591" y="328" width="1" height="2" fill="#f00"/>
<rect x="588.5" y="330.5" width="5" height="23" fill="#000" stroke="#f00" stroke-width="1"/>
<rect x="598" y="324" width="1" height="2" fill="#f00"/>
<rect x="598" y="329" width="1" height="3" fill="#f00"/>
<rect x="595.5" y="326.5" width="5" height="2" fill="#000" stroke="#f00" stroke-width="1"/>
<rect x="605" y="303" width="1" height="7" fill="#f00"/>
<rect x="605" y="326" width="1" height="4" fill="#f00"/>
<rect x="602.5" y="310.5" width="5" height="15" fill="#000" stroke="#f00" stroke-width="1"/>
<rect x="612" y="308" width="1" height="10" fill="#f00"/>
<rect x="609" y="312" width="6" height="1" fill="#f00"/>
<rect x="619" y="310" width="1" height="2" fill="#f00"/>
<rect x="619" y="314" width="1" height="6" fill="#f00"/>
<rect x="616.5" y="312.5" width="5" height="1" fill="#000" stroke="#f00" stroke-width="1"/>
<rect x="626" y="315" width="1" height="15" fill="#0ff"/>
<rect x="623" y="315" width="6" height="13" fill="#0ff"/>
<rect x="633" y="323" width="1" height="3" fill="#f00"/>
<rect x="633" y="330" width="1" height="4" fill="#f00"/>
<rect x="630.5" y="326.5" width="5" height="3" fill="#000" stroke="#f00" stroke-width="1"/>
<rect x="640" y="324" width="1" height="8" fill="#0ff"/>
<rect x="637" y="324" width="6" height="6" fill="#0ff"/>
<rect x="647" y="329" width="1" height="1" fill="#f00"/>
<rect x="647" y="334" width="1" height="6" fill="#f00"/>
<rect x="644.5" y="330.5" width="5" height="3" fill="#000" stroke="#f00" stroke-width="1"/>
<rect x="654" y="328" width="1" height="21" fill="#0ff"/>
<rect x="651" y="337" width="6" height="9" fill="#0ff"/>
<rect x="661" y="350" width="1" height="8" fill="#f00"/>
<rect x="658.5" y="344.5" width="5" height="5" fill="#000" stroke="#f00" stroke-width="1"/>
<rect x="668" y="343" width="1" height="9" fill="#0ff"/>
<rect x="665" y="347" width="6" height="1" fill="#0ff"/>
<rect x="675" y="344" width="1" height="10" fill="#0ff"/>
<rect x="672" y="348" width="6" height="5" fill="#0ff"/>
<rect x="682" y="349" width="1" height="16" fill="#0ff"/>
<rect x="679" y="351" width="6" height="13" fill="#0ff"/>
<rect x="689" y="366" width="1" height="19" fill="#0ff"/>
<rect x="686" y="366" width="6" height="17" fill="#0ff"/>
<rect x="696" y="384" width="1" height="2" fill="#f00"/>
<rect x="693.5" y="373.5" width="5" height="10" fill="#000" stroke="#f00" stroke-width="1"/>
<rect x="703" y="368" width="1" height="2" fill="#f00"/>
<rect x="703" y="373" width="1" height="3" fill="#f00"/>
<rect x="700.5" y="370.5" width="5" height="2" fill="#000" stroke="#f00" stroke-width="1"/>
<rect x="710" y="368" width="1" height="2" fill="#f00"/>
<rect x="710" y="372" width="1" height="9" fill="#f00"/>
<rect x="707.5" y="370.5" width="5" height="1" fill="#000" stroke="#f00" stroke-width="1"/>
<rect x="717" y="363" width="1" height="6" fill="#f00"/>
<rect x="717" y="371" width="1" height="2" fill="#f00"/>
<rect x="714.5" y="369.5" width="5" height="1" fill="#000" stroke="#f00" stroke-width="1"/>
<rect x="724" y="372" width="1" height="8" fill="#0ff"/>
<rect x="721" y="372" width="6" height="7" fill="#0ff"/>
<rect x="731" y="364" width="1" height="12" fill="#f00"/>
<rect x="731" y="381" width="1" height="1" fill="#f00"/>
<rect x="728.5" y="376.5" width="5" height="4" fill="#000" stroke="#f00" stroke-width="1"/>
<rect x="738" y="374" width="1" height="10" fill="#0ff"/>
<rect x="735" y="376" width="6" height="3" fill="#0ff"/>
<rect x="745" y="354" width="1" height="2" fill="#f00"/>
<rect x="745" y="371" width="1" height="4" fill="#f00"/>
<rect x="742.5" y="356.5" width="5" height="14" fill="#000" stroke="#f00" stroke-width="1"/>
<rect x="752" y="352" width="1" height="9" fill="#0ff"/>
<rect x="749" y="354" width="6" height="3" fill="#0ff"/>
<rect x="759" y="353" width="1" height="8" fill="#0ff"/>
<rect x="756" y="357" width="6" height="1" fill="#0ff"/>
<rect x="766" y="359" width="1" height="13" fill="#0ff"/>
<rect x="763" y="360" width="6" height="11" fill="#0ff"/>
<rect x="773" y="371" width="1" height="7" fill="#f00"/>
<rect x="770.5" y="369.5" width="5" height="1" fill="#000" stroke="#f00" stroke-width="1"/>
<rect x="780" y="372" width="1" height="15" fill="#0ff"/>
<rect x="777" y="372" width="6" height="10" fill="#0ff"/>
<rect x="787" y="377" width="1" height="6" fill="#0ff"/>
<rect x="784" y="378" width="6" height="2" fill="#0ff"/>
<rect x="794" y="384" width="1" height="6" fill="#f00"/>
<rect x="791.5" y="371.5" width="5" height="12" fill="#000" stroke="#f00" stroke-width="1"/>
<rect x="801" y="362" width="1" height="12" fill="#0ff"/>
<rect x="798" y="372" width="6" height="2" fill="#0ff"/>
<rect x="808" y="374" width="1" height="1" fill="#f00"/>
<rect x="805.5" y="366.5" width="5" height="7" fill="#000" stroke="#f00" stroke-width="1"/>
<rect x="815" y="361" width="1" height="4" fill="#0ff"/>
<rect x="812" y="361" width="6" height="1" fill="#0ff"/>
<rect x="822" y="361" width="1" height="5" fill="#0ff"/>
<rect x="819" y="363" width="6" height="3" fill="#0ff"/>
<rect x="829" y="355" width="1" height="3" fill="#f00"/>
<rect x="829" y="366" width="1" height="2" fill="#f00"/>
<rect x="826.5" y="358.5" width="5" height="7" fill="#000" stroke="#f00" stroke-width="1"/>
<rect x="836" y="354" width="1" height="9" fill="#0ff"/>
<rect x="833" y="356" width="6" height="6" fill="#0ff"/>
<rect x="843" y="359" width="1" height="8" fill="#0ff"/>
<rect x="840" y="363" width="6" height="1" fill="#0ff"/>
<rect x="850" y="358" width="1" height="6" fill="#0ff"/>
<rect x="847" y="363" width="6" height="1" fill="#0ff"/>
<rect x="857" y="364" width="1" height="14" fill="#0ff"/>
<rect x="854" y="364" width="6" height="7" fill="#0ff"/>
<rect x="864" y="374" width="1" height="2" fill="#f00"/>
<rect x="861.5" y="363.5" width="5" height="10" fill="#000" stroke="#f00" stroke-width="1"/>
<rect x="871" y="362" width="1" height="10" fill="#0ff"/>
<rect x="868" y="362" width="6" height="6" fill="#0ff"/>
<rect x="878" y="360" width="1" height="8" fill="#f00"/>
<rect x="878" y="370" width="1" height="2" fill="#f00"/>
<rect x="875.5" y="368.5" width="5" height="1" fill="#000" stroke="#f00" stroke-width="1"/>
<rect x="885" y="355" width="1" height="2" fill="#f00"/>
<rect x="885" y="365" width="1" height="5" fill="#f00"/>
<rect x="882.5" y="357.5" width="5" height="7" fill="#000" stroke="#f00" stroke-width="1"/>
<rect x="892" y="353" width="1" height="1" fill="#f00"/>
<rect x="892" y="356" width="1" height="4" fill="#f00"/>
<rect x="889.5" y="354.5" width="5" height="1" fill="#000" stroke="#f00" stroke-width="1"/>
<rect x="899" y="353" width="1" height="6" fill="#f00"/>
<rect x="896" y="356" width="6" height="1" fill="#f00"/>
<rect x="906" y="344" width="1" height="1" fill="#f00"/>
<rect x="903.5" y="345.5" width="5" height="10" fill="#000" stroke="#f00" stroke-width="1"/>
<rect x="913" y="336" width="1" height="1" fill="#f00"/>
<rect x="913" y="345" width="1" height="1" fill="#f00"/>
<rect x="910.5" y="337.5" width="5" height="7" fill="#000" stroke="#f00" stroke-width="1"/>
<rect x="920" y="340" width="1" height="9" fill="#0ff"/>
<rect x="917" y="340" width="6" height="7" fill="#0ff"/>
<rect x="927" y="349" width="1" height="7" fill="#0ff"/>
<rect x="924" y="349" width="6" height="5" fill="#0ff"/>
<rect x="934" y="353" width="1" height="22" fill="#0ff"/>
<rect x="931" y="354" width="6" height="18" fill="#0ff"/>
<rect x="941" y="376" width="1" height="3" fill="#f00"/>
<rect x="938.5" y="370.5" width="5" height="5" fill="#000" stroke="#f00" stroke-width="1"/>
<rect x="948" y="367" width="1" height="5" fill="#0ff"/>
<rect x="945" y="370" width="6" height="1" fill="#0ff"/>
<rect x="955" y="365" width="1" height="1" fill="#f00"/>
<rect x="955" y="371" width="1" height="2" fill="#f00"/>
<rect x="952.5" y="366.5" width="5" height="4" fill="#000" stroke="#f00" stroke-width="1"/>
<rect x="962" y="368" width="1" height="7" fill="#0ff"/>
<rect x="959" y="368" width="6" height="3" fill="#0ff"/>
<rect x="969" y="370" width="1" height="1" fill="#f00"/>
<rect x="966.5" y="363.5" width="5" height="6" fill="#000" stroke="#f00" stroke-width="1"/>
<rect x="976" y="360" width="1" height="4" fill="#f00"/>
<rect x="976" y="367" width="1" height="4" fill="#f00"/>
<rect x="973.5" y="364.5" width="5" height="2" fill="#000" stroke="#f00" stroke-width="1"/>
<rect x="983" y="356" width="1" height="2" fill="#f00"/>
<rect x="980.5" y="358.5" width="5" height="3" fill="#000" stroke="#f00" stroke-width="1"/>
<rect x="990" y="356" width="1" height="4" fill="#0ff"/>
<rect x="987" y="356" width="6" height="1" fill="#0ff"/>
<rect x="997" y="351" width="1" height="1" fill="#f00"/>
<rect x="997" y="357" width="1" height="3" fill="#f00"/>
<rect x="994.5" y="352.5" width="5" height="4" fill="#000" stroke="#f00" stroke-width="1"/>
<rect x="1004" y="348" width="1" height="2" fill="#f00"/>
<rect x="1004" y="356" width="1" height="2" fill="#f00"/>
<rect x="1001.5" y="350.5" width="5" height="5" fill="#000" stroke="#f00" stroke-width="1"/>
<rect x="1011" y="350" width="1" height="5" fill="#0ff"/>
<rect x="1008" y="350" width="6" height="2" fill="#0ff"/>
<rect x="1018" y="349" width="1" height="7" fill="#f00"/>
<rect x="1015" y="351" width="6" height="1" fill="#f00"/>
<rect x="1025" y="351" width="1" height="8" fill="#f00"/>
<rect x="1022.5" y="349.5" width="5" height="1" fill="#000" stroke="#f00" stroke-width="1"/>
<rect x="70" y="547" width="6" height="43" fill="#0ff"/>
<rect x="77" y="557" width="6" height="33" fill="#0ff"/>
<rect x="84" y="563" width="6" height="27" fill="#0ff"/>
<rect x="91" y="559" width="6" height="31" fill="#0ff"/>
<rect x="98" y="554" width="6" height="36" fill="#0ff"/>
<rect x="105.5" y="561.5" width="5" height="29" fill="none" stroke="#f00" stroke-width="1"/>
<rect x="112" y="560" width="6" height="30" fill="#0ff"/>
<rect x="119.5" y="563.5" width="5" height="27" fill="none" stroke="#f00" stroke-width="1"/>
<rect x="126" y="557" width="6" height="33" fill="#0ff"/>
<rect x="133.5" y="558.5" width="5" height="32" fill="none" stroke="#f00" stroke-width="1"/>
<rect x="140" y="559" width="6" height="31" fill="#0ff"/>
<rect x="147.5" y="556.5" width="5" height="34" fill="none" stroke="#f00" stroke-width="1"/>
<rect x="154" y="561" width="6" height="29" fill="#0ff"/>
<rect x="161" y="554" width="6" height="36" fill="#0ff"/>
<rect x="168" y="552" width="6" height="38" fill="#0ff"/>
<rect x="175.5" y="563.5" width="5" height="27" fill="none" stroke="#f00" stroke-width="1"/>
<rect x="182" y="560" width="6" height="30" fill="#0ff"/>
<rect x="189" y="558" width="6" height="32" fill="#0ff"/>
<rect x="196" y="558" width="6" height="32" fill="#0ff"/>
<rect x="203" y="562" width="6" height="28" fill="#0ff"/>
<rect x="210.5" y="561.5" width="5" height="29" fill="none" stroke="#f00" stroke-width="1"/>
<rect x="217" y="562" width="6" height="28" fill="#0ff"/>
<rect x="224.5" y="559.5" width="5" height="31" fill="none" stroke="#f00" stroke-width="1"/>
<rect x="231" y="562" width="6" height="28" fill="#0ff"/>
<rect x="238" y="566" width="6" height="24" fill="#0ff"/>
<rect x="245.5" y="565.5" width="5" height="25" fill="none" stroke="#f00" stroke-width="1"/>
<rect x="252.5" y="548.5" width="5" height="42" fill="none" stroke="#f00" stroke-width="1"/>
<rect x="259" y="555" width="6" height="35" fill="#0ff"/>
<rect x="266.5" y="552.5" width="5" height="38" fill="none" stroke="#f00" stroke-width="1"/>
<rect x="273" y="553" width="6" height="37" fill="#0ff"/>
<rect x="280.5" y="561.5" width="5" height="29" fill="none" stroke="#f00" stroke-width="1"/>
<rect x="287.5" y="559.5" width="5" height="31" fill="none" stroke="#f00" stroke-width="1"/>
<rect x="294" y="564" width="6" height="26" fill="#0ff"/>
<rect x="301.5" y="559.5" width="5" height="31" fill="none" stroke="#f00" stroke-width="1"/>
<rect x="308.5" y="538.5" width="5" height="52" fill="none" stroke="#f00" stroke-width="1"/>
<rect x="315.5" y="531.5" width="5" height="59" fill="none" stroke="#f00" stroke-width="1"/>
<rect x="322.5" y="537.5" width="5" height="53" fill="none" stroke="#f00" stroke-width="1"/>
<rect x="329" y="528" width="6" height="62" fill="#0ff"/>
<rect x="336.5" y="543.5" width="5" height="47" fill="none" stroke="#f00" stroke-width="1"/>
<rect x="343.5" y="531.5" width="5" height="59" fill="none" stroke="#f00" stroke-width="1"/>
<rect x="350" y="530" width="6" height="60" fill="#0ff"/>
<rect x="357.5" y="526.5" width="5" height="64" fill="none" stroke="#f00" stroke-width="1"/>
<rect x="364" y="524" width="6" height="66" fill="#0ff"/>
<rect x="371" y="541" width="6" height="49" fill="#0ff"/>
<rect x="378" y="538" width="6" height="52" fill="#0ff"/>
<rect x="385" y="531" width="6" height="59" fill="#0ff"/>
<rect x="392.5" y="544.5" width="5" height="46" fill="none" stroke="#f00" stroke-width="1"/>
<rect x="399.5" y="535.5" width="5" height="55" fill="none" stroke="#f00" stroke-width="1"/>
<rect x="406.5" y="543.5" width="5" height="47" fill="none" stroke="#f00" stroke-width="1"/>
<rect x="413.5" y="537.5" width="5" height="53" fill="none" stroke="#f00" stroke-width="1"/>
<rect x="420.5" y="541.5" width="5" height="49" fill="none" stroke="#f00" stroke-width="1"/>
<rect x="427" y="545" width="6" height="45" fill="#0ff"/>
<rect x="434.5" y="544.5" width="5" height="46" fill="none" stroke="#f00" stroke-width="1"/>
<rect x="441" y="546" width="6" height="44" fill="#0ff"/>
<rect x="448" y="541" width="6" height="49" fill="#0ff"/>
<rect x="455.5" y="552.5" width="5" height="38" fill="none" stroke="#f00" stroke-width="1"/>
<rect x="462.5" y="548.5" width="5" height="42" fill="none" stroke="#f00" stroke-width="1"/>
<rect x="469.5" y="548.5" width="5" height="42" fill="none" stroke="#f00" stroke-width="1"/>
<rect x="476" y="553" width="6" height="37" fill="#0ff"/>
<rect x="483.5" y="554.5" width="5" height="36" fill="none" stroke="#f00" stroke-width="1"/>
<rect x="490" y="549" width="6" height="41" fill="#0ff"/>
<rect x="497.5" y="551.5" width="5" height="39" fill="none" stroke="#f00" stroke-width="1"/>
<rect x="504" y="544" width="6" height="46" fill="#0ff"/>
<rect x="511.5" y="529.5" width="5" height="61" fill="none" stroke="#f00" stroke-width="1"/>
<rect x="518.5" y="528.5" width="5" height="62" fill="none" stroke="#f00" stroke-width="1"/>
<rect x="525.5" y="536.5" width="5" height="54" fill="none" stroke="#f00" stroke-width="1"/>
<rect x="532" y="547" width="6" height="43" fill="#0ff"/>
<rect x="539" y="540" width="6" height="50" fill="#0ff"/>
<rect x="546" y="539" width="6" height="51" fill="#0ff"/>
<rect x="553" y="550" width="6" height="40" fill="#0ff"/>
<rect x="560.5" y="555.5" width="5" height="35" fill="none" stroke="#f00" stroke-width="1"/>
<rect x="567.5" y="547.5" width="5" height="43" fill="none" stroke="#f00" stroke-width="1"/>
<rect x="574" y="544" width="6" height="46" fill="#0ff"/>
<rect x="581.5" y="555.5" width="5" height="35" fill="none" stroke="#f00" stroke-width="1"/>
<rect x="588.5" y="535.5" width="5" height="55" fill="none" stroke="#f00" stroke-width="1"/>
<rect x="595.5" y="547.5" width="5" height="43" fill="none" stroke="#f00" stroke-width="1"/>
<rect x="602.5" y="524.5" width="5" height="66" fill="none" stroke="#f00" stroke-width="1"/>
<rect x="609.5" y="536.5" width="5" height="54" fill="none" stroke="#f00" stroke-width="1"/>
<rect x="616.5" y="547.5" width="5" height="43" fill="none" stroke="#f00" stroke-width="1"/>
<rect x="623" y="545" width="6" height="45" fill="#0ff"/>
<rect x="630.5" y="553.5" width="5" height="37" fill="none" stroke="#f00" stroke-width="1"/>
<rect x="637" y="552" width="6" height="38" fill="#0ff"/>
<rect x="644.5" y="554.5" width="5" height="36" fill="none" stroke="#f00" stroke-width="1"/>
<rect x="651" y="549" width="6" height="41" fill="#0ff"/>
<rect x="658.5" y="549.5" width="5" height="41" fill="none" stroke="#f00" stroke-width="1"/>
<rect x="665" y="557" width="6" height="33" fill="#0ff"/>
<rect x="672" y="557" width="6" height="33" fill="#0ff"/>
<rect x="679" y="551" width="6" height="39" fill="#0ff"/>
<rect x="686" y="552" width="6" height="38" fill="#0ff"/>
<rect x="693.5" y="558.5" width="5" height="32" fill="none" stroke="#f00" stroke-width="1"/>
<rect x="700.5" y="559.5" width="5" height="31" fill="none" stroke="#f00" stroke-width="1"/>
<rect x="707.5" y="556.5" width="5" height="34" fill="none" stroke="#f00" stroke-width="1"/>
<rect x="714.5" y="559.5" width="5" height="31" fill="none" stroke="#f00" stroke-width="1"/>
<rect x="721" y="559" width="6" height="31" fill="#0ff"/>
<rect x="728.5" y="557.5" width="5" height="33" fill="none" stroke="#f00" stroke-width="1"/>
<rect x="735" y="558" width="6" height="32" fill="#0ff"/>
<rect x="742.5" y="541.5" width="5" height="49" fill="none" stroke="#f00" stroke-width="1"/>
<rect x="749" y="549" width="6" height="41" fill="#0ff"/>
<rect x="756" y="560" width="6" height="30" fill="#0ff"/>
<rect x="763" y="558" width="6" height="32" fill="#0ff"/>
<rect x="770.5" y="562.5" width="5" height="28" fill="none" stroke="#f00" stroke-width="1"/>
<rect x="777" y="563" width="6" height="27" fill="#0ff"/>
<rect x="784" y="564" width="6" height="26" fill="#0ff"/>
<rect x="791.5" y="564.5" width="5" height="26" fill="none" stroke="#f00" stroke-width="1"/>
<rect x="798" y="559" width="6" height="31" fill="#0ff"/>
<rect x="805.5" y="563.5" width="5" height="27" fill="none" stroke="#f00" stroke-width="1"/>
<rect x="812" y="560" width="6" height="30" fill="#0ff"/>
<rect x="819" y="562" width="6" height="28" fill="#0ff"/>
<rect x="826.5" y="556.5" width="5" height="34" fill="none" stroke="#f00" stroke-width="1"/>
<rect x="833" y="556" width="6" height="34" fill="#0ff"/>
<rect x="840" y="558" width="6" height="32" fill="#0ff"/>
<rect x="847" y="560" width="6" height="30" fill="#0ff"/>
<rect x="854" y="560" width="6" height="30" fill="#0ff"/>
<rect x="861.5" y="561.5" width="5" height="29" fill="none" stroke="#f00" stroke-width="1"/>
<rect x="868" y="562" width="6" height="28" fill="#0ff"/>
<rect x="875.5" y="563.5" width="5" height="27" fill="none" stroke="#f00" stroke-width="1"/>
<rect x="882.5" y="557.5" width="5" height="33" fill="none" stroke="#f00" stroke-width="1"/>
<rect x="889.5" y="559.5" width="5" height="31" fill="none" stroke="#f00" stroke-width="1"/>
<rect x="896.5" y="556.5" width="5" height="34" fill="none" stroke="#f00" stroke-width="1"/>
<rect x="903.5" y="549.5" width="5" height="41" fill="none" stroke="#f00" stroke-width="1"/>
<rect x="910.5" y="550.5" width="5" height="40" fill="none" stroke="#f00" stroke-width="1"/>
<rect x="917" y="553" width="6" height="37" fill="#0ff"/>
<rect x="924" y="553" width="6" height="37" fill="#0ff"/>
<rect x="931" y="551" width="6" height="39" fill="#0ff"/>
<rect x="938.5" y="562.5" width="5" height="28" fill="none" stroke="#f00" stroke-width="1"/>
<rect x="945" y="560" width="6" height="30" fill="#0ff"/>
<rect x="952.5" y="560.5" width="5" height="30" fill="none" stroke="#f00" stroke-width="1"/>
<rect x="959" y="562" width="6" height="28" fill="#0ff"/>
<rect x="966.5" y="556.5" width="5" height="34" fill="none" stroke="#f00" stroke-width="1"/>
<rect x="973.5" y="549.5" width="5" height="41" fill="none" stroke="#f00" stroke-width="1"/>
<rect x="980.5" y="549.5" width="5" height="41" fill="none" stroke="#f00" stroke-width="1"/>
<rect x="987" y="549" width="6" height="41" fill="#0ff"/>
<rect x="994.5" y="544.5" width="5" height="46" fill="none" stroke="#f00" stroke-width="1"/>
<rect x="1001.5" y="538.5" width="5" height="52" fill="none" stroke="#f00" stroke-width="1"/>
<rect x="1008" y="546" width="6" height="44" fill="#0ff"/>
<rect x="1015.5" y="549.5" width="5" height="41" fill="none" stroke="#f00" stroke-width="1"/>
<rect x="1022.5" y="550.5" width="5" height="40" fill="none" stroke="#f00" stroke-width="1"/>
<rect x="0" y="590" width="1230" height="2" fill="#c8c8c8"/>
<path d="M979.5 528 L983 524 L987.5 528Z" fill="#fff" shape-rendering="auto"/>
<path d="M70 524.5H1230" stroke="#808080" stroke-width="1" stroke-dasharray="3 3" fill="none"/>
<path d="M70 542.5H1230" stroke="#808080" stroke-width="1" stroke-dasharray="3 3" fill="none"/>
<path d="M70 558.5H1230" stroke="#808080" stroke-width="1" stroke-dasharray="3 3" fill="none"/>
<path d="M70 560.5H1230" stroke="#808080" stroke-width="1" stroke-dasharray="3 3" fill="none"/>
<path d="M70 574.5H1230" stroke="#808080" stroke-width="1" stroke-dasharray="3 3" fill="none"/>
<path d="M70 612.5H1230" stroke="#808080" stroke-width="1" stroke-dasharray="3 3" fill="none"/>
<path d="M70 630.5H1230" stroke="#808080" stroke-width="1" stroke-dasharray="3 3" fill="none"/>
<path d="M70 639.5H1230" stroke="#808080" stroke-width="1" stroke-dasharray="3 3" fill="none"/>
<path d="M70 648.5H1230" stroke="#808080" stroke-width="1" stroke-dasharray="3 3" fill="none"/>
<path d="M70 666.5H1230" stroke="#808080" stroke-width="1" stroke-dasharray="3 3" fill="none"/>
<path d="M1029 349.5H1230" stroke="#808080" stroke-width="1" stroke-dasharray="3 3" fill="none"/>
<rect x="0" y="590" width="1230" height="2" fill="#c8c8c8"/>
<rect x="70" y="607" width="1160" height="1" fill="#858585"/>
<clipPath id="cm"><rect x="70" y="141" width="1160" height="383"/></clipPath>
<g clip-path="url(#cm)">
<polyline points="73.4,158.4 86.7,161.0 101.7,160.0 115.1,162.7 126.8,165.0 140.1,168.4 153.5,172.4 160.2,175.1 170.2,172.7 180.2,180.1 193.6,182.4 206.9,183.4 220.3,187.7 233.6,190.8 247.0,194.1 260.3,195.1 273.7,201.1 287.0,206.8 300.4,211.1 313.8,211.1 327.1,215.1 340.5,216.1 350.5,222.5 360.5,225.1 373.9,222.8 387.2,222.1 397.2,224.5 410.6,225.8 417.3,228.5 430.6,229.1 444.0,230.2 457.3,233.5 470.0,232.5 476.7,235.2 493.4,238.5 510.1,238.5 520.1,236.8 533.5,237.5 546.8,235.8 560.2,235.5 573.5,235.2 583.6,232.5 591.9,229.1 596.9,230.8 606.9,227.5 616.9,226.8 630.3,223.5 640.3,222.1 657.0,222.1 670.4,223.5 683.7,224.5 697.1,225.1 710.4,231.8 723.8,236.8 733.8,240.8 750.5,241.8 760.5,244.5 770.5,245.2 783.9,247.8 797.2,249.5 810.6,251.2 820.6,253.5 833.4,252.5 846.7,253.5 860.1,258.5 880.1,259.5 896.8,262.5 910.2,261.2 926.8,263.5 940.2,264.2 948.5,269.2 966.9,273.6 986.9,276.9 1003.6,280.2 1023.7,281.9 1033.7,285.9 1053.7,288.6 1080.4,293.6 1093.8,297.6 1113.8,300.9 1130.5,304.3 1147.2,308.6 1160.6,309.3 1173.9,312.0 1187.3,313.6 1200.6,317.0 1214.0,319.6 1230.0,323.6" fill="none" stroke="#f00" stroke-width="1" />
<polyline points="73.4,454.5 83.4,454.2 88.4,453.5 93.4,454.5 106.7,462.5 121.8,462.5 130.1,465.9 143.5,467.5 156.8,465.2 163.5,463.5 171.9,467.5 183.5,462.5 193.6,465.2 206.9,468.5 220.3,470.2 233.6,471.2 247.0,472.9 257.0,475.9 265.3,475.2 277.0,469.2 283.7,472.6 297.1,472.6 307.1,476.9 318.8,481.2 327.1,479.6 338.8,482.6 350.5,477.6 357.2,477.6 367.2,481.2 377.2,486.9 390.6,496.9 400.6,500.3 410.6,505.3 420.6,505.9 437.3,510.3 444.0,509.6 457.3,512.0 470.0,516.0 480.1,516.0 493.4,515.3 503.4,518.6 513.4,523.0 530.1,523.6 543.5,522.0 556.8,520.3 573.5,521.0 583.6,521.3 591.9,523.6 598.6,519.3 605.3,523.6 616.9,521.3 630.3,521.3 640.3,519.3 650.3,517.6 663.7,518.6 673.7,517.6 683.7,520.3 690.4,524.0 693.7,525.6 697.1,524.0 710.4,521.3 723.8,518.6 733.8,515.3 743.8,514.3 757.2,511.3 770.5,510.3 783.9,508.6 797.2,506.9 810.6,503.6 820.0,500.9 833.4,499.3 843.4,498.6 856.7,489.6 873.4,490.3 886.8,490.3 900.1,486.2 913.5,486.9 926.8,484.2 935.2,483.6 940.9,485.9 948.5,481.9 960.2,482.9 970.3,481.9 983.6,483.6 993.6,482.6 1007.0,479.6 1023.7,477.6 1037.0,469.2 1053.7,463.5 1070.4,456.2 1087.1,446.8 1103.8,441.8 1120.5,435.2 1137.2,426.1 1153.9,421.1 1167.2,418.5 1180.6,412.8 1194.0,409.4 1207.3,403.4 1220.7,396.8 1230.0,392.8" fill="none" stroke="#f00" stroke-width="1" />
<polyline points="73.4,217.5 86.7,219.1 103.4,219.5 120.1,223.5 136.8,226.8 153.5,230.8 170.2,233.5 183.5,237.5 200.2,240.2 216.9,244.2 233.6,246.8 247.0,248.8 260.3,249.5 273.7,255.2 287.0,259.5 300.4,262.9 317.1,265.2 337.1,268.5 353.8,274.6 367.2,275.9 383.9,276.9 397.2,279.6 410.6,281.9 420.6,284.6 434.0,285.9 450.7,286.9 460.7,288.6 470.0,288.9 480.1,291.9 496.7,294.3 516.8,294.3 536.8,292.9 560.2,291.9 583.6,289.6 596.9,287.9 610.3,285.2 623.6,283.6 637.0,281.9 657.0,281.6 670.4,281.6 683.7,282.9 697.1,284.6 710.4,289.2 730.5,295.3 750.5,295.9 767.2,297.9 783.9,300.3 797.2,300.3 813.9,302.6 820.0,302.6 833.4,301.3 845.0,301.3 853.4,303.6 870.1,305.3 896.8,306.9 906.8,305.9 930.2,306.3 943.5,309.3 953.6,312.0 970.3,315.3 993.6,318.6 1020.3,320.3 1030.4,322.0 1053.7,323.0 1070.4,323.0 1087.1,326.0 1103.8,327.6 1120.5,328.6 1133.9,329.3 1143.9,331.0 1163.9,331.3 1177.3,333.0 1194.0,333.7 1207.3,335.3 1220.7,336.3 1230.0,337.7" fill="none" stroke="#ff0" stroke-width="1" />
<polyline points="73.4,373.4 90.1,373.4 106.7,380.1 120.1,380.7 140.1,385.1 160.2,385.1 165.2,384.1 171.9,387.4 185.2,385.1 200.2,388.4 220.3,392.4 240.3,395.8 253.7,398.4 267.0,398.1 277.0,396.8 290.4,399.4 300.4,401.1 317.1,406.8 333.8,408.4 340.5,410.1 350.5,408.4 360.5,409.4 373.9,414.1 390.6,421.8 407.2,427.5 423.9,430.8 437.3,432.8 454.0,434.5 470.0,438.5 476.7,439.2 483.4,440.2 491.7,439.2 506.8,442.5 521.8,445.2 536.8,443.5 556.8,442.5 576.9,442.5 593.6,441.8 600.3,440.2 610.3,440.8 623.6,438.5 640.3,437.8 650.3,436.8 663.7,436.8 677.0,437.8 687.1,439.5 697.1,442.5 707.1,441.8 717.1,441.8 730.5,439.5 743.8,439.5 757.2,437.8 777.2,437.8 797.2,436.8 810.6,435.2 820.0,432.5 843.4,430.8 856.7,426.1 870.1,426.8 886.8,427.5 906.8,425.1 926.8,423.5 940.2,424.1 950.2,423.5 966.9,425.8 986.9,426.8 1003.6,425.1 1023.7,424.1 1037.0,419.1 1053.7,416.1 1070.4,412.8 1087.1,406.8 1103.8,403.4 1120.5,400.1 1137.2,393.4 1153.9,390.1 1170.6,387.4 1187.3,384.1 1204.0,380.1 1217.3,376.7 1230.0,374.1" fill="none" stroke="#ff0" stroke-width="1" />
<polyline points="73.4,283.6 90.7,284.6 113.4,290.9 133.5,293.6 160.2,296.9 186.9,300.3 213.6,305.9 240.3,310.3 270.4,314.3 293.7,320.3 313.8,326.0 337.1,329.3 360.5,333.7 380.5,337.0 397.2,340.3 413.9,343.7 434.0,346.3 454.0,349.7 470.0,352.7 483.4,353.7 503.4,357.0 523.5,358.0 550.2,357.0 570.2,356.0 590.2,354.4 610.3,351.4 630.3,349.3 647.0,347.7 667.0,348.7 683.7,350.4 703.8,353.7 723.8,357.0 750.5,358.7 783.9,359.7 817.3,357.7 860.0,357.0 886.8,357.7 916.8,357.0 933.5,356.4 946.9,358.7 963.6,361.4 986.9,363.7 1007.0,364.4 1033.7,364.4 1060.4,362.0 1093.8,360.4 1120.5,358.0 1153.9,356.0 1187.3,354.4 1230.0,352.7" fill="none" stroke="#fff" stroke-width="1" />
</g>
<path d="M73.5 273.5 L92.5 278.5 M485 394.5 L465.5 399.5" stroke="#fff" stroke-width="1" fill="none"/>
<text x="93.5" y="289" font-size="10.6" fill="#fff" font-family='"DejaVu Sans","Liberation Sans",sans-serif' textLength="58" lengthAdjust="spacingAndGlyphs" shape-rendering="auto">2201.7000</text>
<text x="485.5" y="397" font-size="10.6" fill="#fff" font-family='"DejaVu Sans","Liberation Sans",sans-serif' textLength="58" lengthAdjust="spacingAndGlyphs" >1974.3800</text>
<rect x="73" y="640" width="1" height="15" fill="#0f0"/>
<rect x="80" y="640" width="1" height="21" fill="#0f0"/>
<rect x="87" y="640" width="1" height="24" fill="#0f0"/>
<rect x="94" y="640" width="1" height="27" fill="#0f0"/>
<rect x="101" y="640" width="1" height="35" fill="#0f0"/>
<rect x="108" y="640" width="1" height="37" fill="#0f0"/>
<rect x="115" y="640" width="1" height="36" fill="#0f0"/>
<rect x="122" y="640" width="1" height="31" fill="#0f0"/>
<rect x="129" y="640" width="1" height="30" fill="#0f0"/>
<rect x="136" y="640" width="1" height="25" fill="#0f0"/>
<rect x="143" y="640" width="1" height="20" fill="#0f0"/>
<rect x="150" y="640" width="1" height="13" fill="#0f0"/>
<rect x="157" y="640" width="1" height="8" fill="#0f0"/>
<rect x="164" y="640" width="1" height="8" fill="#0f0"/>
<rect x="171" y="640" width="1" height="13" fill="#0f0"/>
<rect x="178" y="640" width="1" height="14" fill="#0f0"/>
<rect x="185" y="640" width="1" height="14" fill="#0f0"/>
<rect x="192" y="640" width="1" height="15" fill="#0f0"/>
<rect x="199" y="640" width="1" height="17" fill="#0f0"/>
<rect x="206" y="640" width="1" height="17" fill="#0f0"/>
<rect x="213" y="640" width="1" height="13" fill="#0f0"/>
<rect x="220" y="640" width="1" height="9" fill="#0f0"/>
<rect x="227" y="640" width="1" height="6" fill="#0f0"/>
<rect x="234" y="640" width="1" height="5" fill="#0f0"/>
<rect x="241" y="640" width="1" height="6" fill="#0f0"/>
<rect x="248" y="640" width="1" height="3" fill="#0f0"/>
<rect x="255" y="634" width="1" height="5" fill="#f00"/>
<rect x="262" y="630" width="1" height="9" fill="#f00"/>
<rect x="269" y="625" width="1" height="14" fill="#f00"/>
<rect x="276" y="625" width="1" height="14" fill="#f00"/>
<rect x="283" y="624" width="1" height="15" fill="#f00"/>
<rect x="290" y="623" width="1" height="16" fill="#f00"/>
<rect x="297" y="624" width="1" height="15" fill="#f00"/>
<rect x="304" y="624" width="1" height="15" fill="#f00"/>
<rect x="311" y="618" width="1" height="21" fill="#f00"/>
<rect x="318" y="613" width="1" height="26" fill="#f00"/>
<rect x="325" y="609" width="1" height="30" fill="#f00"/>
<rect x="332" y="610" width="1" height="29" fill="#f00"/>
<rect x="339" y="610" width="1" height="29" fill="#f00"/>
<rect x="346" y="608" width="1" height="31" fill="#f00"/>
<rect x="353" y="611" width="1" height="28" fill="#f00"/>
<rect x="360" y="611" width="1" height="28" fill="#f00"/>
<rect x="367" y="613" width="1" height="26" fill="#f00"/>
<rect x="374" y="619" width="1" height="20" fill="#f00"/>
<rect x="381" y="630" width="1" height="9" fill="#f00"/>
<rect x="388" y="640" width="1" height="3" fill="#0f0"/>
<rect x="395" y="640" width="1" height="10" fill="#0f0"/>
<rect x="402" y="640" width="1" height="13" fill="#0f0"/>
<rect x="409" y="640" width="1" height="14" fill="#0f0"/>
<rect x="416" y="640" width="1" height="10" fill="#0f0"/>
<rect x="423" y="640" width="1" height="8" fill="#0f0"/>
<rect x="430" y="640" width="1" height="8" fill="#0f0"/>
<rect x="437" y="640" width="1" height="7" fill="#0f0"/>
<rect x="444" y="640" width="1" height="7" fill="#0f0"/>
<rect x="451" y="640" width="1" height="15" fill="#0f0"/>
<rect x="458" y="640" width="1" height="19" fill="#0f0"/>
<rect x="465" y="640" width="1" height="20" fill="#0f0"/>
<rect x="472" y="640" width="1" height="17" fill="#0f0"/>
<rect x="479" y="640" width="1" height="16" fill="#0f0"/>
<rect x="486" y="640" width="1" height="11" fill="#0f0"/>
<rect x="493" y="640" width="1" height="7" fill="#0f0"/>
<rect x="500" y="640" width="1" height="5" fill="#0f0"/>
<rect x="507" y="640" width="1" height="7" fill="#0f0"/>
<rect x="521" y="633" width="1" height="6" fill="#f00"/>
<rect x="528" y="628" width="1" height="11" fill="#f00"/>
<rect x="535" y="626" width="1" height="13" fill="#f00"/>
<rect x="542" y="627" width="1" height="12" fill="#f00"/>
<rect x="549" y="630" width="1" height="9" fill="#f00"/>
<rect x="556" y="633" width="1" height="6" fill="#f00"/>
<rect x="563" y="633" width="1" height="6" fill="#f00"/>
<rect x="570" y="631" width="1" height="8" fill="#f00"/>
<rect x="577" y="633" width="1" height="6" fill="#f00"/>
<rect x="584" y="632" width="1" height="7" fill="#f00"/>
<rect x="591" y="626" width="1" height="13" fill="#f00"/>
<rect x="598" y="622" width="1" height="17" fill="#f00"/>
<rect x="605" y="617" width="1" height="22" fill="#f00"/>
<rect x="612" y="615" width="1" height="24" fill="#f00"/>
<rect x="619" y="615" width="1" height="24" fill="#f00"/>
<rect x="626" y="621" width="1" height="18" fill="#f00"/>
<rect x="633" y="625" width="1" height="14" fill="#f00"/>
<rect x="640" y="630" width="1" height="9" fill="#f00"/>
<rect x="647" y="634" width="1" height="5" fill="#f00"/>
<rect x="654" y="640" width="1" height="1" fill="#0f0"/>
<rect x="661" y="640" width="1" height="5" fill="#0f0"/>
<rect x="668" y="640" width="1" height="8" fill="#0f0"/>
<rect x="675" y="640" width="1" height="11" fill="#0f0"/>
<rect x="682" y="640" width="1" height="16" fill="#0f0"/>
<rect x="689" y="640" width="1" height="23" fill="#0f0"/>
<rect x="696" y="640" width="1" height="24" fill="#0f0"/>
<rect x="703" y="640" width="1" height="22" fill="#0f0"/>
<rect x="710" y="640" width="1" height="20" fill="#0f0"/>
<rect x="717" y="640" width="1" height="17" fill="#0f0"/>
<rect x="724" y="640" width="1" height="17" fill="#0f0"/>
<rect x="731" y="640" width="1" height="15" fill="#0f0"/>
<rect x="738" y="640" width="1" height="14" fill="#0f0"/>
<rect x="745" y="640" width="1" height="6" fill="#0f0"/>
<rect x="752" y="640" width="1" height="1" fill="#0f0"/>
<rect x="780" y="640" width="1" height="2" fill="#0f0"/>
<rect x="787" y="640" width="1" height="4" fill="#0f0"/>
<rect x="794" y="640" width="1" height="2" fill="#0f0"/>
<rect x="815" y="636" width="1" height="3" fill="#f00"/>
<rect x="822" y="635" width="1" height="4" fill="#f00"/>
<rect x="829" y="632" width="1" height="7" fill="#f00"/>
<rect x="836" y="632" width="1" height="7" fill="#f00"/>
<rect x="843" y="633" width="1" height="6" fill="#f00"/>
<rect x="850" y="633" width="1" height="6" fill="#f00"/>
<rect x="857" y="636" width="1" height="3" fill="#f00"/>
<rect x="864" y="635" width="1" height="4" fill="#f00"/>
<rect x="871" y="637" width="1" height="2" fill="#f00"/>
<rect x="878" y="638" width="1" height="1" fill="#f00"/>
<rect x="885" y="635" width="1" height="4" fill="#f00"/>
<rect x="892" y="633" width="1" height="6" fill="#f00"/>
<rect x="899" y="633" width="1" height="6" fill="#f00"/>
<rect x="906" y="631" width="1" height="8" fill="#f00"/>
<rect x="913" y="627" width="1" height="12" fill="#f00"/>
<rect x="920" y="629" width="1" height="10" fill="#f00"/>
<rect x="927" y="632" width="1" height="7" fill="#f00"/>
<rect x="941" y="640" width="1" height="2" fill="#0f0"/>
<rect x="948" y="640" width="1" height="5" fill="#0f0"/>
<rect x="955" y="640" width="1" height="5" fill="#0f0"/>
<rect x="962" y="640" width="1" height="6" fill="#0f0"/>
<rect x="969" y="640" width="1" height="5" fill="#0f0"/>
<rect x="976" y="640" width="1" height="4" fill="#0f0"/>
<rect x="983" y="640" width="1" height="1" fill="#0f0"/>
<rect x="997" y="638" width="1" height="1" fill="#f00"/>
<rect x="1004" y="636" width="1" height="3" fill="#f00"/>
<rect x="1011" y="635" width="1" height="4" fill="#f00"/>
<rect x="1018" y="634" width="1" height="5" fill="#f00"/>
<rect x="1025" y="635" width="1" height="4" fill="#f00"/>
<rect x="1032" y="635" width="1" height="4" fill="#f00"/>
<rect x="1039" y="635" width="1" height="4" fill="#f00"/>
<rect x="1046" y="635" width="1" height="4" fill="#f00"/>
<rect x="1053" y="637" width="1" height="2" fill="#f00"/>
<rect x="1060" y="637" width="1" height="2" fill="#f00"/>
<rect x="1067" y="638" width="1" height="1" fill="#f00"/>
<rect x="1102" y="640" width="1" height="1" fill="#0f0"/>
<rect x="1109" y="640" width="1" height="1" fill="#0f0"/>
<rect x="1116" y="640" width="1" height="1" fill="#0f0"/>
<rect x="1123" y="640" width="1" height="2" fill="#0f0"/>
<rect x="1130" y="640" width="1" height="2" fill="#0f0"/>
<rect x="1137" y="640" width="1" height="2" fill="#0f0"/>
<rect x="1144" y="640" width="1" height="2" fill="#0f0"/>
<rect x="1151" y="640" width="1" height="2" fill="#0f0"/>
<rect x="1158" y="640" width="1" height="2" fill="#0f0"/>
<rect x="1165" y="640" width="1" height="2" fill="#0f0"/>
<rect x="1172" y="640" width="1" height="2" fill="#0f0"/>
<rect x="1179" y="640" width="1" height="2" fill="#0f0"/>
<rect x="1186" y="640" width="1" height="2" fill="#0f0"/>
<rect x="1193" y="640" width="1" height="2" fill="#0f0"/>
<rect x="1200" y="640" width="1" height="2" fill="#0f0"/>
<rect x="1207" y="640" width="1" height="2" fill="#0f0"/>
<rect x="1214" y="640" width="1" height="2" fill="#0f0"/>
<rect x="1221" y="640" width="1" height="2" fill="#0f0"/>
<rect x="1228" y="640" width="1" height="2" fill="#0f0"/>
<clipPath id="cd"><rect x="70" y="608" width="1160" height="75"/></clipPath>
<g clip-path="url(#cd)">
<polyline points="73.1,623.1 78.5,624.5 85.4,628.4 95.1,633.3 102.0,638.7 108.8,641.5 115.6,647.3 122.4,650.2 129.3,653.8 136.1,657.1 142.9,660.6 149.8,661.6 157.6,662.9 165.4,664.9 173.2,666.4 181.0,668.4 188.8,670.3 196.6,672.7 204.4,674.6 212.2,676.6 220.0,678.1 227.8,679.1 235.6,680.7 241.5,681.5 249.3,681.5 257.1,680.1 264.9,678.1 272.7,676.2 280.5,674.2 288.3,672.3 290.0,671.7 299.8,668.8 309.5,666.0 319.3,660.6 329.0,655.1 338.8,650.2 348.5,645.0 358.3,639.7 368.0,634.6 373.9,631.3 379.8,630.0 385.6,630.0 393.4,631.9 403.2,633.3 411.0,635.8 418.8,637.2 426.6,638.7 434.4,639.7 442.2,640.7 450.0,642.4 457.8,645.6 465.6,648.5 473.4,650.8 481.2,653.4 489.0,655.1 496.8,656.1 504.6,656.7 520.0,655.7 527.8,654.1 537.6,651.4 547.3,649.5 557.1,647.9 566.8,646.9 576.6,645.6 586.3,643.6 596.1,641.5 603.9,639.1 611.7,635.2 619.5,631.9 627.3,628.4 635.1,625.9 642.9,624.5 650.7,624.1 658.5,624.9 666.3,626.0 674.1,628.0 682.0,630.7 689.8,633.3 697.6,636.2 705.4,639.7 715.1,642.0 722.9,645.4 730.7,647.9 738.5,649.9 746.3,650.8 750.0,650.2 761.7,650.2 773.4,650.4 785.1,651.4 796.8,651.8 806.6,651.4 816.3,650.8 828.0,649.3 837.8,647.9 847.6,646.5 859.3,645.0 871.0,644.4 882.7,643.6 894.4,642.0 906.1,640.1 915.9,638.7 925.6,636.8 933.4,636.6 943.2,636.6 952.9,638.1 962.7,638.7 972.4,639.7 980.0,640.5 990.2,640.1 1000.3,638.9 1010.5,638.1 1020.7,636.9 1030.8,636.1 1041.0,635.4 1049.1,634.4 1061.3,634.4 1077.6,634.0 1085.7,633.4 1097.9,633.4 1106.0,634.0 1126.3,634.4 1148.7,634.8 1175.1,635.9 1183.3,636.1 1209.7,636.9 1230.0,637.5" fill="none" stroke="#ff0" stroke-width="1" />
<polyline points="73.1,631.3 78.5,635.2 85.4,640.1 93.2,644.0 102.0,655.1 108.8,661.0 115.6,663.5 122.4,666.4 129.3,670.3 136.1,670.7 143.9,670.3 149.8,668.8 155.6,667.4 160.5,667.4 169.3,671.9 177.1,675.2 184.9,676.2 192.7,679.7 200.5,683.0 208.3,685.0 224.9,682.8 230.7,682.8 241.5,685.0 249.3,683.0 257.1,677.2 264.9,672.7 272.7,669.0 280.5,666.8 288.3,662.5 296.1,661.2 297.8,661.2 307.6,656.7 315.4,649.9 323.2,643.0 332.0,639.1 338.8,635.2 346.6,629.8 352.4,626.8 360.2,623.5 367.1,620.6 373.9,621.2 379.8,623.5 385.6,629.4 391.5,634.2 399.3,639.1 407.1,642.0 414.9,642.0 422.7,642.0 430.5,644.0 438.3,645.4 444.1,645.4 452.0,652.8 459.8,657.7 465.6,659.6 473.4,660.0 480.2,661.6 487.1,660.6 492.9,659.2 500.7,658.6 507.6,660.6 514.4,656.7 520.0,652.8 525.9,647.9 533.7,645.0 543.4,644.4 553.2,644.0 562.0,643.0 568.8,641.5 576.6,641.1 584.4,640.1 592.2,635.2 600.0,630.3 607.8,625.5 615.6,620.6 621.5,618.2 629.3,618.2 637.1,620.0 644.9,621.2 652.7,624.1 660.5,628.4 668.3,631.3 676.1,635.2 683.9,640.1 691.7,646.0 699.5,649.3 707.3,651.4 715.1,652.4 722.9,655.1 730.7,656.3 737.6,657.7 744.4,654.3 750.0,652.4 757.8,649.3 767.6,650.2 777.3,651.4 787.1,653.4 796.8,652.4 806.6,650.8 816.3,648.5 826.1,646.3 835.9,644.4 845.6,643.0 855.4,643.6 865.1,643.0 874.9,643.0 884.6,641.5 894.4,640.1 904.1,636.2 912.0,632.9 919.8,631.7 925.6,631.7 933.4,635.2 941.2,638.1 949.0,640.5 956.8,641.7 964.6,642.4 972.4,642.4 980.0,641.1 988.1,640.1 998.3,637.5 1008.5,636.5 1018.6,635.4 1028.8,633.8 1038.9,633.4 1049.1,633.4 1077.6,633.8 1097.9,634.0 1106.0,634.4 1126.3,635.0 1148.7,635.9 1175.1,636.5 1183.3,637.1 1209.7,637.5 1230.0,638.1" fill="none" stroke="#fff" stroke-width="1" />
</g>
<text x="68" y="522" font-size="12" fill="#b4b4b4" font-family='"Liberation Mono","Noto Serif CJK SC",monospace' textLength="54" lengthAdjust="spacingAndGlyphs" text-anchor="end" >1749.1233</text>
<text x="68" y="546" font-size="12" fill="#b4b4b4" font-family='"Liberation Mono","Noto Serif CJK SC",monospace' textLength="54" lengthAdjust="spacingAndGlyphs" text-anchor="end" >114219832</text>
<text x="68" y="578" font-size="12" fill="#b4b4b4" font-family='"Liberation Mono","Noto Serif CJK SC",monospace' textLength="48" lengthAdjust="spacingAndGlyphs" text-anchor="end" >38073277</text>
<rect x="0" y="554" width="69" height="12" fill="#f00"/>
<text x="1" y="564.5" font-size="12" fill="#fff" font-family='"Liberation Sans","Noto Sans CJK SC",sans-serif' textLength="48" lengthAdjust="spacingAndGlyphs" >71387395</text>
<text x="68" y="616" font-size="12" fill="#b4b4b4" font-family='"Liberation Mono","Noto Serif CJK SC",monospace' textLength="30" lengthAdjust="spacingAndGlyphs" text-anchor="end" >24.17</text>
<text x="68" y="634" font-size="12" fill="#b4b4b4" font-family='"Liberation Mono","Noto Serif CJK SC",monospace' textLength="24" lengthAdjust="spacingAndGlyphs" text-anchor="end" >8.32</text>
<text x="68" y="652" font-size="12" fill="#b4b4b4" font-family='"Liberation Mono","Noto Serif CJK SC",monospace' textLength="30" lengthAdjust="spacingAndGlyphs" text-anchor="end" >-7.54</text>
<text x="68" y="669.5" font-size="12" fill="#b4b4b4" font-family='"Liberation Mono","Noto Serif CJK SC",monospace' textLength="36" lengthAdjust="spacingAndGlyphs" text-anchor="end" >-23.39</text>
<text x="3" y="603.5" font-size="12" fill="#ff0" font-family='"Liberation Serif","Noto Serif CJK SC",serif' textLength="27" lengthAdjust="spacingAndGlyphs" font-weight="bold" >MACD</text>
<text x="75" y="603.5" font-size="12" fill="#fff" font-family='"Liberation Sans","Noto Sans CJK SC",sans-serif' textLength="43" lengthAdjust="spacingAndGlyphs" stroke="#fff" stroke-width=".18">DIF=1.51</text>
<text x="147" y="603.5" font-size="12" fill="#ff0" font-family='"Liberation Sans","Noto Sans CJK SC",sans-serif' textLength="48" lengthAdjust="spacingAndGlyphs" stroke="#ff0" stroke-width=".18">DEA=2.09</text>
<text x="217" y="603.5" font-size="12" fill="#f0f" font-family='"Liberation Sans","Noto Sans CJK SC",sans-serif' textLength="61" lengthAdjust="spacingAndGlyphs" stroke="#f0f" stroke-width=".18">MACD=-1.15</text>
</svg>
</div></body></html>
